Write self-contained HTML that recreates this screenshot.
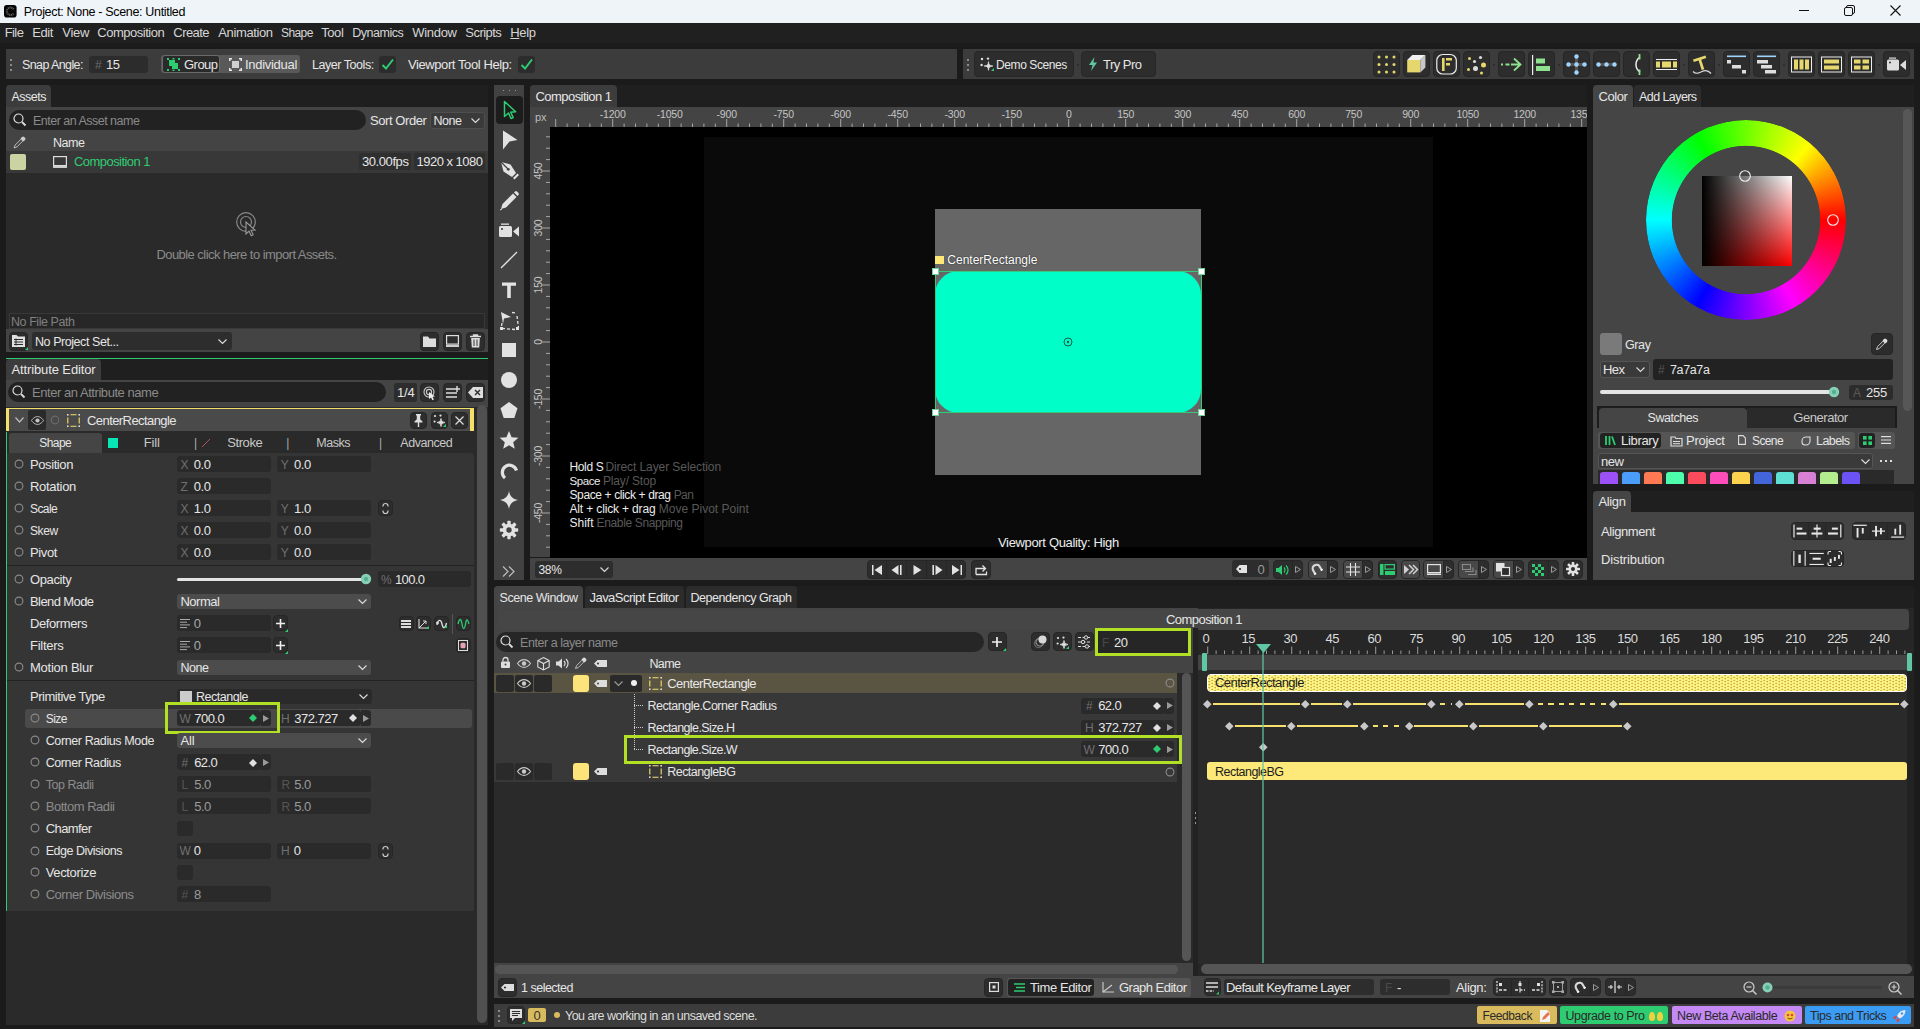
<!DOCTYPE html>
<html lang="en"><head><meta charset="utf-8"><title>Project: None - Scene: Untitled</title>
<style>
html,body{margin:0;padding:0;}
body{width:1920px;height:1029px;overflow:hidden;background:#1b1b1b;position:relative;font-family:"Liberation Sans",sans-serif;font-size:13px;}
div,svg{position:absolute;box-sizing:border-box;}
.t{height:20px;line-height:20px;white-space:nowrap;letter-spacing:-0.4px;}
svg{overflow:visible;}
svg text{font-family:"Liberation Sans",sans-serif;}
</style></head>
<body>
<div style="left:0px;top:0px;width:1920px;height:23px;background:#eff4f9;"></div>
<svg style="left:3.7px;top:4.5px;" width="12.6" height="12.6" viewBox="0 0 12.6 12.6"><rect x="0" y="0" width="12.600" height="12.600" rx="2.800" fill="#050505"/><path d="M9.600 4.200A3.700 3.700 0 1 0 9.600 8.400" fill="none" stroke="#6a6a6a" stroke-width="2" stroke-dasharray="1 .7"/></svg>
<div class="t" style="top:1.5px;color:#000;font-size:12.5px;left:23.7px;letter-spacing:-0.33px;">Project: None - Scene: Untitled</div>
<svg style="left:1799px;top:10px;" width="10" height="1" viewBox="0 0 10 1"><rect width="10" height="1" fill="#111"/></svg>
<svg style="left:1844px;top:5px;" width="11" height="11" viewBox="0 0 11 11"><rect x="0.5" y="2.5" width="8" height="8" rx="1.5" fill="none" stroke="#111"/><path d="M2.5 2.5V2A1.5 1.5 0 0 1 4 .5H9A1.5 1.5 0 0 1 10.5 2V7A1.5 1.5 0 0 1 9 8.5H8.5" fill="none" stroke="#111"/></svg>
<svg style="left:1890px;top:5px;" width="11" height="11" viewBox="0 0 11 11"><path d="M0.5 0.5L10.5 10.5M10.5 0.5L0.5 10.5" stroke="#111" stroke-width="1.1"/></svg>
<div style="left:0px;top:23px;width:1920px;height:20px;background:#202020;"></div>
<div class="t" style="top:22.5px;color:#d6d6d6;left:4.7px;letter-spacing:-0.59px;">File</div>
<div class="t" style="top:22.5px;color:#d6d6d6;left:32.3px;letter-spacing:-0.43px;">Edit</div>
<div class="t" style="top:22.5px;color:#d6d6d6;left:62.3px;letter-spacing:-0.31px;">View</div>
<div class="t" style="top:22.5px;color:#d6d6d6;left:97.3px;letter-spacing:-0.48px;">Composition</div>
<div class="t" style="top:22.5px;color:#d6d6d6;left:173.3px;letter-spacing:-0.55px;">Create</div>
<div class="t" style="top:22.5px;color:#d6d6d6;left:218.3px;letter-spacing:-0.38px;">Animation</div>
<div class="t" style="top:22.5px;color:#d6d6d6;left:281px;letter-spacing:-0.60px;font-size:12.0px;">Shape</div>
<div class="t" style="top:22.5px;color:#d6d6d6;left:321.3px;letter-spacing:-0.46px;">Tool</div>
<div class="t" style="top:22.5px;color:#d6d6d6;left:352.3px;letter-spacing:-0.48px;font-size:12.5px;">Dynamics</div>
<div class="t" style="top:22.5px;color:#d6d6d6;left:412.3px;letter-spacing:-0.31px;">Window</div>
<div class="t" style="top:22.5px;color:#d6d6d6;left:465.3px;letter-spacing:-0.53px;">Scripts</div>
<div class="t" style="top:22.5px;color:#d6d6d6;left:510.3px;letter-spacing:-0.33px;"><u>H</u>elp</div>
<div style="left:6px;top:49px;width:951px;height:30px;background:#3c3c3c;"></div>
<div style="left:10px;top:59px;width:2px;height:2px;background:#8a8a8a;"></div>
<div style="left:10px;top:64px;width:2px;height:2px;background:#8a8a8a;"></div>
<div style="left:10px;top:69px;width:2px;height:2px;background:#8a8a8a;"></div>
<div class="t" style="top:54.5px;color:#e6e6e6;left:22px;letter-spacing:-0.60px;font-size:12.5px;">Snap Angle:</div>
<div style="left:89px;top:56px;width:59px;height:17px;background:#2c2c2c;border-radius:3px;"></div>
<div class="t" style="top:54.5px;color:#6a6a6a;font-size:12px;left:95px;">#</div>
<div class="t" style="top:54.5px;color:#e6e6e6;left:106px;letter-spacing:-0.48px;">15</div>
<div style="left:161px;top:55px;width:139px;height:18px;background:#595959;border-radius:3px;"></div>
<div style="left:162px;top:55px;width:58px;height:18px;background:#2a2a2a;border-radius:3px;border:1px solid #6a6a6a;"></div>
<svg style="left:167px;top:58px;" width="13" height="13" viewBox="0 0 13 13"><rect x="2" y="2" width="6" height="6" fill="#2ecc71"/><rect x="5" y="5" width="6" height="6" fill="#2ecc71"/><g fill="#2ecc71"><rect x="0" y="0" width="2" height="2"/><rect x="11" y="0" width="2" height="2"/><rect x="0" y="11" width="2" height="2"/><rect x="11" y="11" width="2" height="2"/><rect x="5.5" y="0" width="2" height="1.5"/><rect x="5.5" y="11.5" width="2" height="1.5"/></g></svg>
<div class="t" style="top:54.5px;color:#e6e6e6;left:184px;letter-spacing:-0.53px;">Group</div>
<svg style="left:229px;top:58px;" width="13" height="13" viewBox="0 0 13 13"><rect x="3" y="3" width="7" height="7" fill="#d0d0d0"/><g fill="#e8e8e8"><rect x="0" y="0" width="3" height="1.5"/><rect x="0" y="0" width="1.5" height="3"/><rect x="10" y="0" width="3" height="1.5"/><rect x="11.5" y="0" width="1.5" height="3"/><rect x="0" y="11.5" width="3" height="1.5"/><rect x="0" y="10" width="1.5" height="3"/><rect x="10" y="11.5" width="3" height="1.5"/><rect x="11.5" y="10" width="1.5" height="3"/></g></svg>
<div class="t" style="top:54.5px;color:#e6e6e6;left:245px;letter-spacing:-0.29px;">Individual</div>
<div class="t" style="top:54.5px;color:#e6e6e6;left:312px;letter-spacing:-0.45px;font-size:12.5px;">Layer Tools:</div>
<div style="left:379px;top:56px;width:17px;height:17px;background:#2c2c2c;border-radius:3px;"></div>
<svg style="left:381px;top:58px;" width="13" height="13" viewBox="0 0 13 13"><path d="M1.5 7L5 10.5L12 1.5" fill="none" stroke="#2ecc71" stroke-width="2"/></svg>
<div class="t" style="top:54.5px;color:#e6e6e6;left:408px;letter-spacing:-0.41px;">Viewport Tool Help:</div>
<div style="left:518px;top:56px;width:17px;height:17px;background:#2c2c2c;border-radius:3px;"></div>
<svg style="left:520px;top:58px;" width="13" height="13" viewBox="0 0 13 13"><path d="M1.5 7L5 10.5L12 1.5" fill="none" stroke="#2ecc71" stroke-width="2"/></svg>
<div style="left:963px;top:49px;width:951px;height:30px;background:#3c3c3c;"></div>
<div style="left:967px;top:59px;width:2px;height:2px;background:#8a8a8a;"></div>
<div style="left:967px;top:64px;width:2px;height:2px;background:#8a8a8a;"></div>
<div style="left:967px;top:69px;width:2px;height:2px;background:#8a8a8a;"></div>
<div style="left:974.3px;top:50.7px;width:99.5px;height:26.8px;background:#2d2d2d;border-radius:4px;border:1px solid #262626;"></div>
<svg style="left:980px;top:57px;" width="14" height="14" viewBox="0 0 14 14"><g fill="#e0e0e0"><circle cx="2" cy="2" r="1.2"/><circle cx="8" cy="1.6" r="1.2"/><circle cx="1.6" cy="8" r="1.2"/><path d="M8.5 4.7Q8.5 9 12.8 9Q8.5 9 8.5 13.3Q8.5 9 4.2 9Q8.5 9 8.5 4.7z" fill="#e0e0e0" stroke="#e0e0e0" stroke-width=".8" stroke-linejoin="round"/></g><path d="M14 11v3h-3z" fill="#2ecc71"/></svg>
<div class="t" style="top:54.5px;color:#e6e6e6;left:996px;letter-spacing:-0.40px;font-size:12.0px;">Demo Scenes</div>
<div style="left:1076.5px;top:63.5px;width:2px;height:2px;background:#2a2a2a;border-radius:1px;"></div>
<div style="left:1081.3px;top:50.7px;width:74.5px;height:26.8px;background:#2d2d2d;border-radius:4px;border:1px solid #262626;"></div>
<svg style="left:1088px;top:57px;" width="10" height="14" viewBox="0 0 10 14"><path d="M6.5 0L1 8H4.6L3 14L9 5.5H5.4z" fill="#5fc7a4"/></svg>
<div class="t" style="top:54.5px;color:#e6e6e6;left:1103px;letter-spacing:-0.52px;">Try Pro</div>
<div style="left:1372.9px;top:50.7px;width:27px;height:26.8px;background:#2d2d2d;border-radius:4px;border:1px solid #262626;"></div>
<div style="left:1402.9px;top:50.7px;width:27px;height:26.8px;background:#2d2d2d;border-radius:4px;border:1px solid #262626;"></div>
<div style="left:1432.9px;top:50.7px;width:27px;height:26.8px;background:#2d2d2d;border-radius:4px;border:1px solid #262626;"></div>
<div style="left:1462.9px;top:50.7px;width:27px;height:26.8px;background:#2d2d2d;border-radius:4px;border:1px solid #262626;"></div>
<div style="left:1497.9px;top:50.7px;width:27px;height:26.8px;background:#2d2d2d;border-radius:4px;border:1px solid #262626;"></div>
<div style="left:1527.9px;top:50.7px;width:27px;height:26.8px;background:#2d2d2d;border-radius:4px;border:1px solid #262626;"></div>
<div style="left:1562.9px;top:50.7px;width:27px;height:26.8px;background:#2d2d2d;border-radius:4px;border:1px solid #262626;"></div>
<div style="left:1592.9px;top:50.7px;width:27px;height:26.8px;background:#2d2d2d;border-radius:4px;border:1px solid #262626;"></div>
<div style="left:1622.9px;top:50.7px;width:27px;height:26.8px;background:#2d2d2d;border-radius:4px;border:1px solid #262626;"></div>
<div style="left:1652.9px;top:50.7px;width:27px;height:26.8px;background:#2d2d2d;border-radius:4px;border:1px solid #262626;"></div>
<div style="left:1687.9px;top:50.7px;width:27px;height:26.8px;background:#2d2d2d;border-radius:4px;border:1px solid #262626;"></div>
<div style="left:1722.9px;top:50.7px;width:27px;height:26.8px;background:#2d2d2d;border-radius:4px;border:1px solid #262626;"></div>
<div style="left:1752.9px;top:50.7px;width:27px;height:26.8px;background:#2d2d2d;border-radius:4px;border:1px solid #262626;"></div>
<div style="left:1787.9px;top:50.7px;width:27px;height:26.8px;background:#2d2d2d;border-radius:4px;border:1px solid #262626;"></div>
<div style="left:1817.9px;top:50.7px;width:27px;height:26.8px;background:#2d2d2d;border-radius:4px;border:1px solid #262626;"></div>
<div style="left:1847.9px;top:50.7px;width:27px;height:26.8px;background:#2d2d2d;border-radius:4px;border:1px solid #262626;"></div>
<div style="left:1882.9px;top:50.7px;width:27px;height:26.8px;background:#2d2d2d;border-radius:4px;border:1px solid #262626;"></div>
<div style="left:1493.0px;top:63.5px;width:2px;height:2px;background:#2a2a2a;border-radius:1px;"></div>
<div style="left:1558.0px;top:63.5px;width:2px;height:2px;background:#2a2a2a;border-radius:1px;"></div>
<div style="left:1683.0px;top:63.5px;width:2px;height:2px;background:#2a2a2a;border-radius:1px;"></div>
<div style="left:1718.0px;top:63.5px;width:2px;height:2px;background:#2a2a2a;border-radius:1px;"></div>
<div style="left:1783.0px;top:63.5px;width:2px;height:2px;background:#2a2a2a;border-radius:1px;"></div>
<div style="left:1878.0px;top:63.5px;width:2px;height:2px;background:#2a2a2a;border-radius:1px;"></div>
<svg style="left:1372.9px;top:50.7px;" width="27" height="27" viewBox="0 0 27 27"><circle cx="6.0" cy="6.0" r="1.5" fill="#e5d76e"/><circle cx="13.5" cy="6.0" r="1.5" fill="#e5d76e"/><circle cx="21.0" cy="6.0" r="1.5" fill="#e5d76e"/><circle cx="6.0" cy="13.5" r="1.5" fill="#e5d76e"/><circle cx="13.5" cy="13.5" r="1.5" fill="#e5d76e"/><circle cx="21.0" cy="13.5" r="1.5" fill="#e5d76e"/><circle cx="6.0" cy="21.0" r="1.5" fill="#e5d76e"/><circle cx="13.5" cy="21.0" r="1.5" fill="#e5d76e"/><circle cx="21.0" cy="21.0" r="1.5" fill="#e5d76e"/></svg>
<svg style="left:1402.9px;top:50.7px;" width="27" height="27" viewBox="0 0 27 27"><path d="M4.200 9h13.100v12.400h-13.100z" fill="#e5d76e"/><path d="M4.200 9l5.100-5h13.100l-5.100 5z" fill="#f0f0f0"/><path d="M17.300 9l5.100-5v12.400l-5.100 5z" fill="#c8c8c8"/></svg>
<svg style="left:1432.9px;top:50.7px;" width="27" height="27" viewBox="0 0 27 27"><rect x="3.800" y="3.500" width="19.500" height="19.500" rx="6" fill="none" stroke="#eee" stroke-width="1.200"/><path d="M9 7h2.6v13H9zM13 7h6v2.6h-6zM13 12h4v2.6h-4z" fill="#e5d76e"/></svg>
<svg style="left:1462.9px;top:50.7px;" width="27" height="27" viewBox="0 0 27 27"><circle cx="6.5" cy="7.5" r="1.5" fill="#e5d76e"/><circle cx="17.5" cy="6.5" r="1.6" fill="#ddd"/><circle cx="11.5" cy="10.5" r="1.6" fill="#ddd"/><circle cx="20.5" cy="14" r="2.5" fill="#e5d76e"/><circle cx="12.5" cy="17.5" r="2.5" fill="#ddd"/><circle cx="5.5" cy="18.5" r="1.5" fill="#e5d76e"/><circle cx="18.5" cy="22" r="1.5" fill="#e5d76e"/></svg>
<svg style="left:1497.9px;top:50.7px;" width="27" height="27" viewBox="0 0 27 27"><path d="M3 13.5h2M7.5 13.5h4M13 13.5h9M16 7.5l6.5 6l-6.5 6" fill="none" stroke="#8fe08f" stroke-width="1.8"/></svg>
<svg style="left:1527.9px;top:50.7px;" width="27" height="27" viewBox="0 0 27 27"><rect x="4" y="4" width="1.2" height="20" fill="#eee"/><rect x="8" y="7.5" width="9" height="5" fill="#8fe08f"/><rect x="8" y="15" width="14" height="5" fill="#8fe08f"/></svg>
<svg style="left:1562.9px;top:50.7px;" width="27" height="27" viewBox="0 0 27 27"><path d="M13.5 6v15M6 13.5h15" stroke="#555" stroke-width="3"/><circle cx="13.5" cy="5.5" r="2.2" fill="#9fd4ff"/><circle cx="5.5" cy="13.5" r="2.2" fill="#9fd4ff"/><circle cx="13.5" cy="13.5" r="2.2" fill="#9fd4ff"/><circle cx="21.5" cy="13.5" r="2.2" fill="#9fd4ff"/><circle cx="13.5" cy="21.5" r="2.2" fill="#9fd4ff"/></svg>
<svg style="left:1592.9px;top:50.7px;" width="27" height="27" viewBox="0 0 27 27"><path d="M5 13.5h17" stroke="#555" stroke-width="3"/><circle cx="5.5" cy="13.5" r="2.2" fill="#9fd4ff"/><circle cx="13.5" cy="13.5" r="2.2" fill="#9fd4ff"/><circle cx="21.5" cy="13.5" r="2.2" fill="#9fd4ff"/></svg>
<svg style="left:1622.9px;top:50.7px;" width="27" height="27" viewBox="0 0 27 27"><path d="M17 6A9 9 0 0 0 17 21" fill="none" stroke="#eee" stroke-width="1.500"/><path d="M16.500 3v5.500M16.500 18.500v5.500" stroke="#8fe08f" stroke-width="1.800"/></svg>
<svg style="left:1652.9px;top:50.7px;" width="27" height="27" viewBox="0 0 27 27"><path d="M3 8.5h21M3 18.5h21" stroke="#eee" stroke-width="1"/><rect x="3" y="10.5" width="4" height="6" fill="#e5d76e"/><rect x="9" y="10.5" width="9" height="6" fill="#e5d76e"/><rect x="20" y="10.5" width="4" height="6" fill="#e5d76e"/></svg>
<svg style="left:1687.9px;top:50.7px;" width="27" height="27" viewBox="0 0 27 27"><path d="M5 8.5L17.5 4.5L18.3 7L13.2 8.7L16.3 18.2L13.6 19L10.6 9.5L5.8 11z" fill="#e5d76e"/><path d="M5 20.5c3 3 6 1.5 9 0s6-1.5 9 2" fill="none" stroke="#ddd" stroke-width="1.2"/></svg>
<svg style="left:1722.9px;top:50.7px;" width="27" height="27" viewBox="0 0 27 27"><rect x="4" y="4.5" width="19" height="1.6" fill="#9fd4ff"/><rect x="4" y="9" width="4" height="3.5" fill="#ddd"/><rect x="9" y="14" width="9" height="3.5" fill="#ddd"/><rect x="19" y="19" width="4" height="3.5" fill="#ddd"/></svg>
<svg style="left:1752.9px;top:50.7px;" width="27" height="27" viewBox="0 0 27 27"><rect x="4" y="4.5" width="19" height="1.6" fill="#9fd4ff"/><rect x="4" y="9" width="11" height="3.5" fill="#ddd"/><rect x="8" y="14" width="11" height="3.5" fill="#ddd"/><rect x="12" y="19" width="11" height="3.5" fill="#ddd"/></svg>
<svg style="left:1787.9px;top:50.7px;" width="27" height="27" viewBox="0 0 27 27"><rect x="3.5" y="6" width="20" height="15" fill="none" stroke="#eee" stroke-width="1"/><rect x="6" y="8.5" width="4" height="10" fill="#e5d76e"/><rect x="11.5" y="8.5" width="4" height="10" fill="#e5d76e"/><rect x="17" y="8.5" width="4" height="10" fill="#e5d76e"/></svg>
<svg style="left:1817.9px;top:50.7px;" width="27" height="27" viewBox="0 0 27 27"><rect x="3.5" y="6" width="20" height="15" fill="none" stroke="#eee" stroke-width="1"/><rect x="6" y="8.5" width="15" height="4" fill="#e5d76e"/><rect x="6" y="14.5" width="15" height="4" fill="#e5d76e"/></svg>
<svg style="left:1847.9px;top:50.7px;" width="27" height="27" viewBox="0 0 27 27"><rect x="3.5" y="6" width="20" height="15" fill="none" stroke="#eee" stroke-width="1"/><rect x="6" y="8.5" width="6.5" height="4" fill="#e5d76e"/><rect x="14.5" y="8.5" width="6.5" height="4" fill="#e5d76e"/><rect x="6" y="14.5" width="6.5" height="4" fill="#e5d76e"/><rect x="14.5" y="14.5" width="6.5" height="4" fill="#e5d76e"/></svg>
<svg style="left:1882.9px;top:50.7px;" width="27" height="27" viewBox="0 0 27 27"><rect x="4" y="8.5" width="12" height="11" rx="1.5" fill="#ddd"/><path d="M17 14l6-5v10z" fill="#ddd"/><rect x="6" y="6.5" width="7" height="1.2" fill="#ddd"/><circle cx="7" cy="11.5" r="1" fill="#333"/></svg>
<div style="left:6px;top:85px;width:482px;height:22px;background:#1f1f1f;"></div>
<div style="left:6px;top:85px;width:45px;height:22px;background:#3c3c3c;border-radius:4px 4px 0 0;"></div>
<div class="t" style="top:87.2px;color:#e6e6e6;left:11.5px;letter-spacing:-0.50px;font-size:12.5px;">Assets</div>
<div style="left:6px;top:107px;width:482px;height:245px;background:#2a2a2a;"></div>
<div style="left:6px;top:107px;width:482px;height:44px;background:#444;"></div>
<div style="left:9px;top:110px;width:357px;height:20px;background:#222;border-radius:10px;"></div>
<svg style="left:13px;top:113px;" width="14" height="14" viewBox="0 0 14 14"><circle cx="5.5" cy="5.5" r="4.5" fill="none" stroke="#ddd" stroke-width="1.2"/><path d="M9 9l3.5 3.5" stroke="#ddd" stroke-width="1.8"/></svg>
<div class="t" style="top:110.5px;color:#8a8a8a;left:33px;letter-spacing:-0.51px;font-size:12.5px;">Enter an Asset name</div>
<div class="t" style="top:110.5px;color:#e6e6e6;left:370px;letter-spacing:-0.42px;">Sort Order</div>
<div style="left:430px;top:112px;width:55px;height:17px;background:#3a3a3a;border-radius:3px;border:1px solid #4e4e4e;"></div>
<div class="t" style="top:110.5px;color:#e6e6e6;left:433.5px;letter-spacing:-0.47px;font-size:12.5px;">None</div>
<svg style="left:471px;top:118px;" width="9" height="5" viewBox="0 0 9 5"><path d="M0.5 0.5l4 4l4-4" fill="none" stroke="#ddd" stroke-width="1.1"/></svg>
<svg style="left:13px;top:136px;" width="13" height="13" viewBox="0 0 13 13"><path d="M1 12l1.2-3L8 3.2l1.8 1.8L4 10.8z" fill="none" stroke="#bbb" stroke-width="1"/><path d="M7.5 2.5l1.5-1.5a1.6 1.6 0 0 1 2.2 0l.8.8a1.6 1.6 0 0 1 0 2.2l-1.5 1.5z" fill="#ccc"/></svg>
<div class="t" style="top:132.5px;color:#e6e6e6;left:53px;letter-spacing:-0.46px;font-size:12.5px;">Name</div>
<div style="left:6px;top:151px;width:482px;height:22px;background:#383838;"></div>
<div style="left:10px;top:154px;width:16px;height:16px;background:#cbd3a3;border-radius:2px;"></div>
<svg style="left:53px;top:156px;" width="14" height="12" viewBox="0 0 14 12"><rect x="0.6" y="0.6" width="12.8" height="9" fill="none" stroke="#ddd" stroke-width="1.2"/><rect x="0" y="10" width="14" height="2" fill="#ccc"/></svg>
<div class="t" style="top:152px;color:#2ecc71;left:74px;letter-spacing:-0.55px;">Composition 1</div>
<div style="left:359px;top:153px;width:52px;height:17px;background:#2f2f2f;border-radius:2px;"></div>
<div class="t" style="top:151.5px;color:#e6e6e6;left:362px;letter-spacing:-0.42px;">30.00fps</div>
<div style="left:414px;top:153px;width:71px;height:17px;background:#2f2f2f;border-radius:2px;"></div>
<div class="t" style="top:151.5px;color:#e6e6e6;left:416.5px;letter-spacing:-0.51px;">1920 x 1080</div>
<svg style="left:236px;top:211px;" width="24" height="28" viewBox="0 0 24 28"><circle cx="10" cy="11" r="9.3" fill="none" stroke="#888" stroke-width="1.2"/><circle cx="10" cy="11" r="5.5" fill="none" stroke="#888" stroke-width="1.2"/><path d="M10 11v12l3-2.8l2.2 4.6l2-1l-2.2-4.5l4-.3z" fill="#2a2a2a" stroke="#999" stroke-width="1.1"/></svg>
<div class="t" style="top:245px;color:#8a8a8a;left:96.5px;width:300px;text-align:center;letter-spacing:-0.55px;">Double click here to import Assets.</div>
<div style="left:9px;top:313px;width:476px;height:16px;background:#272727;border:1px solid #383838;"></div>
<div class="t" style="top:311.5px;color:#808080;left:11px;letter-spacing:-0.44px;font-size:12.5px;">No File Path</div>
<div style="left:6px;top:329px;width:482px;height:23px;background:#444;"></div>
<div style="left:9px;top:331.5px;width:19px;height:19px;background:#2d2d2d;border-radius:4px;border:1px solid #262626;"></div>
<svg style="left:12px;top:335px;" width="13" height="12" viewBox="0 0 13 12"><path d="M0 0h4.500l1.500 1.500H13v10.500H0z" fill="#e0e0e0"/><path d="M2 4.500h9M2 7h9M2 9.500h9" stroke="#2d2d2d" stroke-width="1.200"/><path d="M4 3.500v7" stroke="#2d2d2d" stroke-width="1"/></svg>
<svg style="left:25px;top:347px;" width="3" height="3" viewBox="0 0 3 3"><path d="M3 0v3h-3z" fill="#2ecc71"/></svg>
<div style="left:32px;top:332px;width:200px;height:18px;background:#2d2d2d;border-radius:3px;"></div>
<div class="t" style="top:331.5px;color:#e6e6e6;left:35px;letter-spacing:-0.44px;font-size:12.5px;">No Project Set...</div>
<svg style="left:218px;top:339px;" width="9" height="5" viewBox="0 0 9 5"><path d="M0.5 0.5l4 4l4-4" fill="none" stroke="#ddd" stroke-width="1.1"/></svg>
<div style="left:420px;top:331.5px;width:19px;height:19px;background:#2d2d2d;border-radius:4px;border:1px solid #262626;"></div>
<div style="left:443px;top:331.5px;width:19px;height:19px;background:#2d2d2d;border-radius:4px;border:1px solid #262626;"></div>
<div style="left:466px;top:331.5px;width:19px;height:19px;background:#2d2d2d;border-radius:4px;border:1px solid #262626;"></div>
<svg style="left:423px;top:335px;" width="13" height="12" viewBox="0 0 13 12"><path d="M0 1.5h5l1.5 2H13v8.5H0z" fill="#ddd"/></svg>
<svg style="left:446px;top:335px;" width="13" height="12" viewBox="0 0 13 12"><rect x="0.6" y="0.6" width="11.8" height="8.5" fill="none" stroke="#ddd" stroke-width="1.2"/><rect x="0" y="10" width="13" height="2" fill="#ccc"/></svg>
<svg style="left:470px;top:334px;" width="11" height="14" viewBox="0 0 11 14"><path d="M0 2.5h11M3.5 2.5V1h4v1.5" stroke="#ddd" stroke-width="1.3" fill="none"/><path d="M1.2 4h8.6l-.6 9.5H1.8z" fill="#ddd"/><path d="M4 5.5v6.5M7 5.5v6.5" stroke="#333" stroke-width="1"/></svg>
<div style="left:6px;top:357.5px;width:482px;height:1px;background:#2ecc71;"></div>
<div style="left:6px;top:359px;width:482px;height:22px;background:#1f1f1f;"></div>
<div style="left:6px;top:359px;width:95px;height:21px;background:#3c3c3c;border-radius:4px 4px 0 0;"></div>
<div class="t" style="top:360px;color:#e6e6e6;left:11.5px;letter-spacing:-0.12px;">Attribute Editor</div>
<div style="left:6px;top:380px;width:482px;height:645px;background:#2a2a2a;"></div>
<div style="left:6px;top:380px;width:482px;height:27px;background:#444;"></div>
<div style="left:8px;top:382px;width:378px;height:20px;background:#222;border-radius:10px;"></div>
<svg style="left:12px;top:385px;" width="14" height="14" viewBox="0 0 14 14"><circle cx="5.5" cy="5.5" r="4.5" fill="none" stroke="#ddd" stroke-width="1.2"/><path d="M9 9l3.5 3.5" stroke="#ddd" stroke-width="1.8"/></svg>
<div class="t" style="top:382.5px;color:#8a8a8a;left:32px;letter-spacing:-0.45px;">Enter an Attribute name</div>
<div style="left:394px;top:383px;width:23px;height:19px;background:#2d2d2d;border-radius:3px;"></div>
<div class="t" style="top:382.5px;color:#e6e6e6;left:397px;letter-spacing:-0.19px;">1/4</div>
<div style="left:420px;top:383px;width:19px;height:19px;background:#2d2d2d;border-radius:4px;border:1px solid #262626;"></div>
<div style="left:443px;top:383px;width:19px;height:19px;background:#2d2d2d;border-radius:4px;border:1px solid #262626;"></div>
<div style="left:466px;top:383px;width:19px;height:19px;background:#2d2d2d;border-radius:4px;border:1px solid #262626;"></div>
<svg style="left:423px;top:386px;" width="14" height="14" viewBox="0 0 14 14"><circle cx="6" cy="6" r="5" fill="none" stroke="#ccc" stroke-width="1.1"/><circle cx="6" cy="6" r="2.6" fill="none" stroke="#ccc" stroke-width="1.1"/><path d="M6 6v7l2-1.6l1.4 2.8l1.5-.7l-1.4-2.7l2.5-.2z" fill="#eee"/></svg>
<svg style="left:446px;top:386px;" width="14" height="13" viewBox="0 0 14 13"><path d="M0 3h8M0 7h11M0 11h11" stroke="#ddd" stroke-width="1.6"/><path d="M11 0v6M8 3h6" stroke="#ddd" stroke-width="1.4"/></svg>
<svg style="left:468px;top:387px;" width="15" height="11" viewBox="0 0 15 11"><path d="M0 5.5L5 0h10v11H5z" fill="#ddd"/><path d="M7 3l5 5M12 3l-5 5" stroke="#2d2d2d" stroke-width="1.4"/></svg>
<div style="left:476.5px;top:405px;width:10px;height:618px;background:#505050;border-radius:5px;"></div>
<div style="left:6px;top:408px;width:468px;height:23px;background:#4a4a4a;border-top:1.5px solid #f3e06a;border-left:3px solid #f3e06a;border-right:4px solid #f3e06a;"></div>
<svg style="left:15px;top:417px;" width="9" height="6" viewBox="0 0 9 6"><path d="M0.5 0.5l4 4.5l4-4.5" fill="none" stroke="#bbb" stroke-width="1.2"/></svg>
<div style="left:28px;top:410px;width:18px;height:20px;background:#2a2a2a;border-radius:2px;"></div>
<svg style="left:30.5px;top:415.5px;" width="13" height="9" viewBox="0 0 13 9"><path d="M.5 4.500C3 1 5 .6 6.500 .6S10 1 12.500 4.500C10 8 8 8.400 6.500 8.400S3 8 .5 4.500z" fill="none" stroke="#c4c4c4" stroke-width="1"/><circle cx="6.500" cy="4.500" r="2.100" fill="#c4c4c4"/></svg>
<svg style="left:50px;top:415px;" width="10" height="10" viewBox="0 0 10 10"><circle cx="5" cy="5" r="3.8" fill="none" stroke="#6a6a6a" stroke-width="1.2"/></svg>
<svg style="left:67px;top:414px;" width="13" height="13" viewBox="0 0 13 13"><path d="M3.500 .8h6M3.500 12.200h6M.8 3.500v6M12.200 3.500v6" stroke="#f3e06a" stroke-width="1.100"/><g fill="#ddd"><rect width="1.600" height="1.600"/><rect x="11.400" width="1.600" height="1.600"/><rect y="11.400" width="1.600" height="1.600"/><rect x="11.400" y="11.400" width="1.600" height="1.600"/></g></svg>
<div class="t" style="top:410.5px;color:#e6e6e6;left:87px;letter-spacing:-0.57px;">CenterRectangle</div>
<div style="left:410px;top:412px;width:17px;height:17px;background:#2d2d2d;border-radius:4px;border:1px solid #262626;"></div>
<div style="left:430.5px;top:412px;width:17px;height:17px;background:#2d2d2d;border-radius:4px;border:1px solid #262626;"></div>
<div style="left:451px;top:412px;width:17px;height:17px;background:#2d2d2d;border-radius:4px;border:1px solid #262626;"></div>
<svg style="left:414px;top:414px;" width="9" height="13" viewBox="0 0 9 13"><path d="M2 0h5v1.2l-.8.6v3.4l2.3 2.3v1H5.2V13h-1.4V8.5H.5v-1l2.3-2.3V1.8L2 1.2z" fill="#ddd"/></svg>
<svg style="left:433px;top:414px;" width="13" height="13" viewBox="0 0 13 13"><g fill="#e0e0e0"><circle cx="2" cy="2" r="1.1"/><circle cx="7.5" cy="1.6" r="1.1"/><circle cx="1.6" cy="7.5" r="1.1"/></g><path d="M8 4.5Q8 8.5 12 8.5Q8 8.5 8 12.5Q8 8.5 4 8.5Q8 8.5 8 4.5z" fill="#e0e0e0" stroke="#e0e0e0" stroke-width=".8" stroke-linejoin="round"/><path d="M13 10v3h-3z" fill="#2ecc71"/></svg>
<svg style="left:455px;top:416px;" width="9" height="9" viewBox="0 0 9 9"><path d="M0.5 0.5l8 8M8.5 0.5l-8 8" stroke="#ddd" stroke-width="1.2"/></svg>
<div style="left:6px;top:431px;width:468px;height:22px;background:#2a2a2a;"></div>
<div style="left:6px;top:453px;width:468px;height:457.5px;background:#353535;border-radius:0 4px 0 0;"></div>
<div style="left:6px;top:432px;width:1px;height:478.5px;background:#2ecc71;"></div>
<div style="left:8.5px;top:433px;width:93.5px;height:20px;background:#454545;border-radius:3px 3px 0 0;"></div>
<div class="t" style="top:433px;color:#e6e6e6;left:-94.8px;width:300px;text-align:center;letter-spacing:-0.54px;font-size:12.0px;">Shape</div>
<div style="left:108px;top:438.4px;width:10px;height:9.6px;background:#08e6b6;"></div>
<div class="t" style="top:433px;color:#c8c8c8;left:1.8000000000000114px;width:300px;text-align:center;letter-spacing:-0.15px;">Fill</div>
<div class="t" style="top:432.5px;color:#aaa;font-size:12px;left:45.30000000000001px;width:300px;text-align:center;">|</div>
<svg style="left:201px;top:438px;" width="10" height="10" viewBox="0 0 10 10"><rect width="10" height="10" fill="#2a2a2a"/><path d="M1 9L9 1" stroke="#a85858" stroke-width="1"/></svg>
<div class="t" style="top:433px;color:#c8c8c8;left:94.80000000000001px;width:300px;text-align:center;letter-spacing:-0.43px;">Stroke</div>
<div class="t" style="top:432.5px;color:#aaa;font-size:12px;left:137.5px;width:300px;text-align:center;">|</div>
<div class="t" style="top:433px;color:#c8c8c8;left:183.2px;width:300px;text-align:center;letter-spacing:-0.42px;font-size:12.5px;">Masks</div>
<div class="t" style="top:432.5px;color:#aaa;font-size:12px;left:230.3px;width:300px;text-align:center;">|</div>
<div class="t" style="top:433px;color:#c8c8c8;left:276.3px;width:300px;text-align:center;letter-spacing:-0.45px;font-size:12.5px;">Advanced</div>
<svg style="left:13.8px;top:459.2px;" width="10" height="10" viewBox="0 0 10 10"><circle cx="5" cy="5" r="3.9" fill="none" stroke="#8a8a8a" stroke-width="1.1"/></svg>
<div class="t" style="top:454.7px;color:#e6e6e6;left:30px;letter-spacing:-0.41px;">Position</div>
<div style="left:177px;top:456.0px;width:93.7px;height:16px;background:#2a2a2a;border-radius:3px;"></div>
<div class="t" style="top:454.7px;color:#707070;font-size:12px;left:180.5px;">X</div>
<div class="t" style="top:454.7px;color:#e6e6e6;left:193.7px;letter-spacing:-0.36px;">0.0</div>
<div style="left:277.2px;top:456.0px;width:93.7px;height:16px;background:#2a2a2a;border-radius:3px;"></div>
<div class="t" style="top:454.7px;color:#707070;font-size:12px;left:280.7px;">Y</div>
<div class="t" style="top:454.7px;color:#e6e6e6;left:293.9px;letter-spacing:-0.36px;">0.0</div>
<svg style="left:13.8px;top:481.3px;" width="10" height="10" viewBox="0 0 10 10"><circle cx="5" cy="5" r="3.9" fill="none" stroke="#8a8a8a" stroke-width="1.1"/></svg>
<div class="t" style="top:476.8px;color:#e6e6e6;left:30px;letter-spacing:-0.30px;">Rotation</div>
<div style="left:177px;top:478.1px;width:93.7px;height:16px;background:#2a2a2a;border-radius:3px;"></div>
<div class="t" style="top:476.8px;color:#707070;font-size:12px;left:180.5px;">Z</div>
<div class="t" style="top:476.8px;color:#e6e6e6;left:193.7px;letter-spacing:-0.36px;">0.0</div>
<svg style="left:13.8px;top:503.3px;" width="10" height="10" viewBox="0 0 10 10"><circle cx="5" cy="5" r="3.9" fill="none" stroke="#8a8a8a" stroke-width="1.1"/></svg>
<div class="t" style="top:498.8px;color:#e6e6e6;left:30px;letter-spacing:-0.58px;font-size:12.0px;">Scale</div>
<div style="left:177px;top:500.1px;width:93.7px;height:16px;background:#2a2a2a;border-radius:3px;"></div>
<div class="t" style="top:498.8px;color:#707070;font-size:12px;left:180.5px;">X</div>
<div class="t" style="top:498.8px;color:#e6e6e6;left:193.7px;letter-spacing:-0.36px;">1.0</div>
<div style="left:277.2px;top:500.1px;width:93.7px;height:16px;background:#2a2a2a;border-radius:3px;"></div>
<div class="t" style="top:498.8px;color:#707070;font-size:12px;left:280.7px;">Y</div>
<div class="t" style="top:498.8px;color:#e6e6e6;left:293.9px;letter-spacing:-0.36px;">1.0</div>
<svg style="left:13.8px;top:525.1px;" width="10" height="10" viewBox="0 0 10 10"><circle cx="5" cy="5" r="3.9" fill="none" stroke="#8a8a8a" stroke-width="1.1"/></svg>
<div class="t" style="top:520.6px;color:#e6e6e6;left:30px;letter-spacing:-0.41px;font-size:12.0px;">Skew</div>
<div style="left:177px;top:521.9px;width:93.7px;height:16px;background:#2a2a2a;border-radius:3px;"></div>
<div class="t" style="top:520.6px;color:#707070;font-size:12px;left:180.5px;">X</div>
<div class="t" style="top:520.6px;color:#e6e6e6;left:193.7px;letter-spacing:-0.36px;">0.0</div>
<div style="left:277.2px;top:521.9px;width:93.7px;height:16px;background:#2a2a2a;border-radius:3px;"></div>
<div class="t" style="top:520.6px;color:#707070;font-size:12px;left:280.7px;">Y</div>
<div class="t" style="top:520.6px;color:#e6e6e6;left:293.9px;letter-spacing:-0.36px;">0.0</div>
<svg style="left:13.8px;top:547.1px;" width="10" height="10" viewBox="0 0 10 10"><circle cx="5" cy="5" r="3.9" fill="none" stroke="#8a8a8a" stroke-width="1.1"/></svg>
<div class="t" style="top:542.6px;color:#e6e6e6;left:30px;letter-spacing:-0.36px;">Pivot</div>
<div style="left:177px;top:543.9px;width:93.7px;height:16px;background:#2a2a2a;border-radius:3px;"></div>
<div class="t" style="top:542.6px;color:#707070;font-size:12px;left:180.5px;">X</div>
<div class="t" style="top:542.6px;color:#e6e6e6;left:193.7px;letter-spacing:-0.36px;">0.0</div>
<div style="left:277.2px;top:543.9px;width:93.7px;height:16px;background:#2a2a2a;border-radius:3px;"></div>
<div class="t" style="top:542.6px;color:#707070;font-size:12px;left:280.7px;">Y</div>
<div class="t" style="top:542.6px;color:#e6e6e6;left:293.9px;letter-spacing:-0.36px;">0.0</div>
<div style="left:377.5px;top:500.1px;width:15px;height:16px;background:#2d2d2d;border-radius:4px;border:1px solid #262626;"></div>
<svg style="left:381.5px;top:503.3px;" width="7" height="11" viewBox="0 0 7 11"><path d="M1 3.5V3A2.5 2.5 0 0 1 6 3v.5M1 7.5V8A2.5 2.5 0 0 0 6 8v-.5" fill="none" stroke="#ccc" stroke-width="1.2"/></svg>
<div style="left:7px;top:565px;width:467px;height:1px;background:#222;"></div>
<svg style="left:13.8px;top:574.0px;" width="10" height="10" viewBox="0 0 10 10"><circle cx="5" cy="5" r="3.9" fill="none" stroke="#8a8a8a" stroke-width="1.1"/></svg>
<div class="t" style="top:569.5px;color:#e6e6e6;left:30px;letter-spacing:-0.37px;">Opacity</div>
<div style="left:177px;top:577.5px;width:189px;height:3.4px;background:#e4e4e4;border-radius:2px;"></div>
<svg style="left:360px;top:573.0px;" width="12" height="12" viewBox="0 0 12 12"><circle cx="6" cy="6" r="5.2" fill="#86d0b6"/><circle cx="6" cy="6" r="2.200" fill="#55b092"/></svg>
<div style="left:377.5px;top:570.8px;width:93px;height:16px;background:#2a2a2a;border-radius:3px;"></div>
<div class="t" style="top:569.5px;color:#707070;font-size:12px;left:381px;">%</div>
<div class="t" style="top:569.5px;color:#e6e6e6;left:395px;letter-spacing:-0.61px;">100.0</div>
<svg style="left:13.8px;top:596.1px;" width="10" height="10" viewBox="0 0 10 10"><circle cx="5" cy="5" r="3.9" fill="none" stroke="#8a8a8a" stroke-width="1.1"/></svg>
<div class="t" style="top:591.6px;color:#e6e6e6;left:30px;letter-spacing:-0.59px;">Blend Mode</div>
<div style="left:177px;top:593.6px;width:193.5px;height:15px;background:#4c4c4c;border-radius:3px;"></div>
<div class="t" style="top:591.6px;color:#e6e6e6;left:180.4px;letter-spacing:-0.48px;">Normal</div>
<svg style="left:357.5px;top:599.1px;" width="9" height="5" viewBox="0 0 9 5"><path d="M0.5 0.5l4 4l4-4" fill="none" stroke="#ddd" stroke-width="1.1"/></svg>
<div class="t" style="top:613.6px;color:#e6e6e6;left:30px;letter-spacing:-0.41px;">Deformers</div>
<div style="left:177px;top:614.9px;width:93.7px;height:16px;background:#2a2a2a;border-radius:3px;"></div>
<svg style="left:180px;top:619.1px;" width="10" height="9" viewBox="0 0 10 9"><path d="M0 .5h10M0 3.2h7M0 5.9h10M0 8.6h7" stroke="#aaa" stroke-width="1"/></svg>
<div class="t" style="top:613.6px;color:#a8a8a8;left:193.7px;">0</div>
<div style="left:273.4px;top:614.9px;width:15px;height:16px;background:#2d2d2d;border-radius:4px;border:1px solid #262626;"></div>
<svg style="left:276.4px;top:618.6px;" width="9" height="9" viewBox="0 0 9 9"><path d="M4.5 0v9M0 4.5h9" stroke="#eee" stroke-width="1.6"/></svg>
<svg style="left:285px;top:628.6px;" width="3" height="3" viewBox="0 0 3 3"><path d="M3 0v3h-3z" fill="#2ecc71"/></svg>
<div style="left:398.5px;top:615.6px;width:15px;height:15.5px;background:#2d2d2d;border-radius:4px;border:1px solid #262626;"></div>
<div style="left:416px;top:615.6px;width:15px;height:15.5px;background:#2d2d2d;border-radius:4px;border:1px solid #262626;"></div>
<div style="left:434px;top:615.6px;width:15px;height:15.5px;background:#2d2d2d;border-radius:4px;border:1px solid #262626;"></div>
<div style="left:455.7px;top:615.6px;width:15px;height:15.5px;background:#2d2d2d;border-radius:4px;border:1px solid #262626;"></div>
<svg style="left:401px;top:619.6px;" width="10" height="8" viewBox="0 0 10 8"><path d="M0 1h10M0 4h10M0 7h10" stroke="#ddd" stroke-width="1.8"/></svg>
<svg style="left:418px;top:618.6px;" width="11" height="10" viewBox="0 0 11 10"><path d="M1 0v9h9" fill="none" stroke="#ddd" stroke-width="1.1"/><path d="M1 9L8 2M8 2h-3M8 2v3" fill="none" stroke="#ddd" stroke-width="1"/><path d="M11 7v3h-3z" fill="#2ecc71"/></svg>
<svg style="left:436px;top:619.6px;" width="11" height="8" viewBox="0 0 11 8"><path d="M1 5c1-6 4-6 5-1s3 5 4.5-1" fill="none" stroke="#ddd" stroke-width="1.3"/><circle cx="1.5" cy="3" r="1.4" fill="#ddd"/><path d="M11 5v3h-3z" fill="#2ecc71"/></svg>
<div style="left:452px;top:613.6px;width:1px;height:20px;background:#555;"></div>
<svg style="left:457.5px;top:619.6px;" width="11" height="8" viewBox="0 0 11 8"><path d="M0 4c1.5-6 3-6 4 0s2.5 6 3.5 0s2-5 3.5 0" fill="none" stroke="#2ecc71" stroke-width="1.3"/></svg>
<div class="t" style="top:635.6px;color:#e6e6e6;left:30px;letter-spacing:-0.27px;">Filters</div>
<div style="left:177px;top:636.9px;width:93.7px;height:16px;background:#2a2a2a;border-radius:3px;"></div>
<svg style="left:180px;top:641.1px;" width="10" height="9" viewBox="0 0 10 9"><path d="M0 .5h10M0 3.2h7M0 5.9h10M0 8.6h7" stroke="#aaa" stroke-width="1"/></svg>
<div class="t" style="top:635.6px;color:#a8a8a8;left:193.7px;">0</div>
<div style="left:273.4px;top:636.9px;width:15px;height:16px;background:#2d2d2d;border-radius:4px;border:1px solid #262626;"></div>
<svg style="left:276.4px;top:640.6px;" width="9" height="9" viewBox="0 0 9 9"><path d="M4.5 0v9M0 4.5h9" stroke="#eee" stroke-width="1.6"/></svg>
<svg style="left:285px;top:650.6px;" width="3" height="3" viewBox="0 0 3 3"><path d="M3 0v3h-3z" fill="#2ecc71"/></svg>
<div style="left:455.7px;top:637.6px;width:15px;height:15.5px;background:#2d2d2d;border-radius:4px;border:1px solid #262626;"></div>
<svg style="left:458.2px;top:640.1px;" width="10" height="11" viewBox="0 0 10 11"><rect x="0.5" y="0.5" width="9" height="10" fill="none" stroke="#ddd" stroke-width="1"/><rect x="2.5" y="2.7" width="5" height="5.6" rx="1.5" fill="#e8a0b0"/></svg>
<svg style="left:13.8px;top:662.2px;" width="10" height="10" viewBox="0 0 10 10"><circle cx="5" cy="5" r="3.9" fill="none" stroke="#8a8a8a" stroke-width="1.1"/></svg>
<div class="t" style="top:657.7px;color:#e6e6e6;left:30px;letter-spacing:-0.25px;">Motion Blur</div>
<div style="left:177px;top:659.7px;width:193.5px;height:15px;background:#4c4c4c;border-radius:3px;"></div>
<div class="t" style="top:657.7px;color:#e6e6e6;left:180.4px;letter-spacing:-0.47px;font-size:12.5px;">None</div>
<svg style="left:357.5px;top:665.2px;" width="9" height="5" viewBox="0 0 9 5"><path d="M0.5 0.5l4 4l4-4" fill="none" stroke="#ddd" stroke-width="1.1"/></svg>
<div style="left:7px;top:680.4px;width:467px;height:1px;background:#222;"></div>
<div class="t" style="top:686.7px;color:#e6e6e6;left:30px;letter-spacing:-0.47px;">Primitive Type</div>
<div style="left:177px;top:688.7px;width:194.5px;height:15px;background:#2a2a2a;border-radius:3px;"></div>
<div style="left:180px;top:690.7px;width:12px;height:12px;background:#ccc;"></div>
<div class="t" style="top:686.7px;color:#e6e6e6;left:196px;letter-spacing:-0.48px;font-size:12.5px;">Rectangle</div>
<svg style="left:359px;top:694.2px;" width="9" height="5" viewBox="0 0 9 5"><path d="M0.5 0.5l4 4l4-4" fill="none" stroke="#ddd" stroke-width="1.1"/></svg>
<div style="left:25px;top:708.5px;width:446.5px;height:19.5px;background:#4a4a4a;border-radius:3px;"></div>
<svg style="left:29.799999999999997px;top:713.0px;" width="10" height="10" viewBox="0 0 10 10"><circle cx="5" cy="5" r="3.9" fill="none" stroke="#8a8a8a" stroke-width="1.1"/></svg>
<div class="t" style="top:708.5px;color:#e6e6e6;left:45.7px;letter-spacing:-0.51px;font-size:12.0px;">Size</div>
<div style="left:177px;top:709.8px;width:84px;height:16px;background:#2a2a2a;border-radius:3px;"></div>
<div class="t" style="top:708.5px;color:#707070;font-size:12px;left:179.5px;">W</div>
<div class="t" style="top:708.5px;color:#e6e6e6;left:194.2px;letter-spacing:-0.51px;">700.0</div>
<svg style="left:249px;top:714.2px;" width="8" height="8" viewBox="0 0 8 8"><path d="M4 0l4 4l-4 4l-4-4z" fill="#2ecc71"/></svg>
<div style="left:261.3px;top:709.8px;width:9.5px;height:16px;background:#2a2a2a;border-radius:0 3px 3px 0;"></div>
<svg style="left:262.8px;top:715.0px;" width="6" height="7" viewBox="0 0 6 7"><path d="M0 0l6 3.5l-6 3.5z" fill="#9a9a9a"/></svg>
<div style="left:277.2px;top:709.8px;width:84px;height:16px;background:#2a2a2a;border-radius:3px;"></div>
<div class="t" style="top:708.5px;color:#707070;font-size:12px;left:281px;">H</div>
<div class="t" style="top:708.5px;color:#e6e6e6;left:294.3px;letter-spacing:-0.50px;">372.727</div>
<svg style="left:348.8px;top:714.2px;" width="8" height="8" viewBox="0 0 8 8"><path d="M4 0l4 4l-4 4l-4-4z" fill="#e0e0e0"/></svg>
<div style="left:361.4px;top:709.8px;width:9.5px;height:16px;background:#2a2a2a;border-radius:0 3px 3px 0;"></div>
<svg style="left:362.9px;top:715.0px;" width="6" height="7" viewBox="0 0 6 7"><path d="M0 0l6 3.5l-6 3.5z" fill="#9a9a9a"/></svg>
<div style="left:165px;top:702px;width:115px;height:31.5px;border:3px solid #b2e024;"></div>
<svg style="left:29.799999999999997px;top:735.3px;" width="10" height="10" viewBox="0 0 10 10"><circle cx="5" cy="5" r="3.9" fill="none" stroke="#8a8a8a" stroke-width="1.1"/></svg>
<div class="t" style="top:730.8px;color:#e6e6e6;left:45.7px;letter-spacing:-0.39px;font-size:12.5px;">Corner Radius Mode</div>
<div style="left:177px;top:732.8px;width:193.5px;height:15px;background:#4c4c4c;border-radius:3px;"></div>
<div class="t" style="top:730.8px;color:#e6e6e6;left:180.4px;letter-spacing:-0.15px;">All</div>
<svg style="left:357.5px;top:738.3px;" width="9" height="5" viewBox="0 0 9 5"><path d="M0.5 0.5l4 4l4-4" fill="none" stroke="#ddd" stroke-width="1.1"/></svg>
<svg style="left:29.799999999999997px;top:757.3px;" width="10" height="10" viewBox="0 0 10 10"><circle cx="5" cy="5" r="3.9" fill="none" stroke="#8a8a8a" stroke-width="1.1"/></svg>
<div class="t" style="top:752.8px;color:#e6e6e6;left:45.7px;letter-spacing:-0.41px;font-size:12.5px;">Corner Radius</div>
<div style="left:177px;top:754.0999999999999px;width:84px;height:16px;background:#2a2a2a;border-radius:3px;"></div>
<div class="t" style="top:752.8px;color:#707070;font-size:12px;left:181.5px;">#</div>
<div class="t" style="top:752.8px;color:#e6e6e6;left:194.2px;letter-spacing:-0.58px;">62.0</div>
<svg style="left:249px;top:758.5px;" width="8" height="8" viewBox="0 0 8 8"><path d="M4 0l4 4l-4 4l-4-4z" fill="#e0e0e0"/></svg>
<div style="left:261.3px;top:754.0999999999999px;width:9.5px;height:16px;background:#2a2a2a;border-radius:0 3px 3px 0;"></div>
<svg style="left:262.8px;top:759.3px;" width="6" height="7" viewBox="0 0 6 7"><path d="M0 0l6 3.5l-6 3.5z" fill="#9a9a9a"/></svg>
<svg style="left:29.799999999999997px;top:779.2px;" width="10" height="10" viewBox="0 0 10 10"><circle cx="5" cy="5" r="3.9" fill="none" stroke="#8a8a8a" stroke-width="1.1"/></svg>
<div class="t" style="top:774.7px;color:#8c8c8c;left:45.7px;letter-spacing:-0.48px;font-size:12.5px;">Top Radii</div>
<div style="left:177px;top:776.0px;width:93.7px;height:16px;background:#2a2a2a;border-radius:3px;"></div>
<div class="t" style="top:774.7px;color:#555;font-size:12px;left:181.5px;">L</div>
<div class="t" style="top:774.7px;color:#9a9a9a;left:194.2px;letter-spacing:-0.52px;">5.0</div>
<div style="left:277.2px;top:776.0px;width:93.7px;height:16px;background:#2a2a2a;border-radius:3px;"></div>
<div class="t" style="top:774.7px;color:#555;font-size:12px;left:281.5px;">R</div>
<div class="t" style="top:774.7px;color:#9a9a9a;left:294.3px;letter-spacing:-0.52px;">5.0</div>
<svg style="left:29.799999999999997px;top:801.4px;" width="10" height="10" viewBox="0 0 10 10"><circle cx="5" cy="5" r="3.9" fill="none" stroke="#8a8a8a" stroke-width="1.1"/></svg>
<div class="t" style="top:796.9px;color:#8c8c8c;left:45.7px;letter-spacing:-0.47px;">Bottom Radii</div>
<div style="left:177px;top:798.1999999999999px;width:93.7px;height:16px;background:#2a2a2a;border-radius:3px;"></div>
<div class="t" style="top:796.9px;color:#555;font-size:12px;left:181.5px;">L</div>
<div class="t" style="top:796.9px;color:#9a9a9a;left:194.2px;letter-spacing:-0.52px;">5.0</div>
<div style="left:277.2px;top:798.1999999999999px;width:93.7px;height:16px;background:#2a2a2a;border-radius:3px;"></div>
<div class="t" style="top:796.9px;color:#555;font-size:12px;left:281.5px;">R</div>
<div class="t" style="top:796.9px;color:#9a9a9a;left:294.3px;letter-spacing:-0.52px;">5.0</div>
<svg style="left:29.799999999999997px;top:823.2px;" width="10" height="10" viewBox="0 0 10 10"><circle cx="5" cy="5" r="3.9" fill="none" stroke="#8a8a8a" stroke-width="1.1"/></svg>
<div class="t" style="top:818.7px;color:#e6e6e6;left:45.7px;letter-spacing:-0.58px;">Chamfer</div>
<div style="left:177px;top:820.7px;width:15.5px;height:15px;background:#2a2a2a;border-radius:3px;"></div>
<svg style="left:29.799999999999997px;top:845.7px;" width="10" height="10" viewBox="0 0 10 10"><circle cx="5" cy="5" r="3.9" fill="none" stroke="#8a8a8a" stroke-width="1.1"/></svg>
<div class="t" style="top:841.2px;color:#e6e6e6;left:45.7px;letter-spacing:-0.46px;font-size:12.5px;">Edge Divisions</div>
<div style="left:177px;top:842.5px;width:93.7px;height:16px;background:#2a2a2a;border-radius:3px;"></div>
<div class="t" style="top:841.2px;color:#707070;font-size:12px;left:179.5px;">W</div>
<div class="t" style="top:841.2px;color:#e6e6e6;left:193.8px;">0</div>
<div style="left:277.2px;top:842.5px;width:93.7px;height:16px;background:#2a2a2a;border-radius:3px;"></div>
<div class="t" style="top:841.2px;color:#707070;font-size:12px;left:281px;">H</div>
<div class="t" style="top:841.2px;color:#e6e6e6;left:293.8px;">0</div>
<div style="left:377.5px;top:842.5px;width:15px;height:16px;background:#2d2d2d;border-radius:4px;border:1px solid #262626;"></div>
<svg style="left:381.5px;top:845.7px;" width="7" height="11" viewBox="0 0 7 11"><path d="M1 3.5V3A2.5 2.5 0 0 1 6 3v.5M1 7.5V8A2.5 2.5 0 0 0 6 8v-.5" fill="none" stroke="#ccc" stroke-width="1.2"/></svg>
<svg style="left:29.799999999999997px;top:867.1px;" width="10" height="10" viewBox="0 0 10 10"><circle cx="5" cy="5" r="3.9" fill="none" stroke="#8a8a8a" stroke-width="1.1"/></svg>
<div class="t" style="top:862.6px;color:#e6e6e6;left:45.7px;letter-spacing:-0.35px;">Vectorize</div>
<div style="left:177px;top:864.6px;width:15.5px;height:15px;background:#2a2a2a;border-radius:3px;"></div>
<svg style="left:29.799999999999997px;top:889.0px;" width="10" height="10" viewBox="0 0 10 10"><circle cx="5" cy="5" r="3.9" fill="none" stroke="#8a8a8a" stroke-width="1.1"/></svg>
<div class="t" style="top:884.5px;color:#8c8c8c;left:45.7px;letter-spacing:-0.47px;">Corner Divisions</div>
<div style="left:177px;top:885.8px;width:93.7px;height:16px;background:#2a2a2a;border-radius:3px;"></div>
<div class="t" style="top:884.5px;color:#555;font-size:12px;left:181.5px;">#</div>
<div class="t" style="top:884.5px;color:#9a9a9a;left:194px;">8</div>
<div style="left:494px;top:85px;width:30px;height:495px;background:#424242;"></div>
<div style="left:502.5px;top:89.5px;width:1.6px;height:1.6px;background:#999;"></div>
<div style="left:508.5px;top:89.5px;width:1.6px;height:1.6px;background:#999;"></div>
<div style="left:514.5px;top:89.5px;width:1.6px;height:1.6px;background:#999;"></div>
<div style="left:495.5px;top:96px;width:27.5px;height:27.5px;background:#1c1c1c;border-radius:4px;"></div>
<svg style="left:498.0px;top:99.0px;" width="22" height="22" viewBox="0 0 22 22"><path d="M6.5 2.5v15l4-3.5l2.5 5.5l2.2-1l-2.5-5.3l5-.4z" fill="none" stroke="#2ecc71" stroke-width="1.5" stroke-linejoin="round"/></svg>
<svg style="left:498.0px;top:129.0px;" width="22" height="22" viewBox="0 0 22 22"><path d="M5 1.500L19.500 11L11.500 12.500L5 20.500z" fill="#e2e2e2"/></svg>
<svg style="left:498.0px;top:159.0px;" width="22" height="22" viewBox="0 0 22 22"><path d="M3 3l9.5 2.5l5.5 8.5l-4 4l-8.5-5.5z" fill="#e2e2e2"/><path d="M3 3l7 7" stroke="#424242" stroke-width="1.2"/><circle cx="10.3" cy="10.3" r="1.4" fill="#424242"/><path d="M15 19l4.5-4.5l1.5 1.5l-4.5 4.5z" fill="#e2e2e2"/></svg>
<svg style="left:498.0px;top:189.0px;" width="22" height="22" viewBox="0 0 22 22"><path d="M3 20l1.5-5L15 4.5l3.5 3.5L8 18.5z" fill="#e2e2e2"/><path d="M16 3.5l1-1a1.5 1.5 0 0 1 2 0l1.5 1.5a1.5 1.5 0 0 1 0 2l-1 1z" fill="#e2e2e2"/><path d="M2 21l2-1" stroke="#e2e2e2" stroke-width="1"/></svg>
<svg style="left:498.0px;top:219.0px;" width="22" height="22" viewBox="0 0 22 22"><rect x="1" y="7" width="13" height="11" rx="1.5" fill="#e2e2e2"/><path d="M15 12.5l6-5v10z" fill="#e2e2e2"/><rect x="3" y="4.5" width="8" height="1.3" fill="#e2e2e2"/><circle cx="4" cy="10" r="1" fill="#333"/></svg>
<svg style="left:498.0px;top:249.0px;" width="22" height="22" viewBox="0 0 22 22"><path d="M3 19L19 3" stroke="#e2e2e2" stroke-width="1.3"/></svg>
<svg style="left:498.0px;top:279.0px;" width="22" height="22" viewBox="0 0 22 22"><path d="M4 3.5h14v3.2h-5.2V19h-3.6V6.7H4z" fill="#e2e2e2"/></svg>
<svg style="left:498.0px;top:309.0px;" width="22" height="22" viewBox="0 0 22 22"><path d="M3 3l10 5l-7 1.5l-1 5.5z" fill="#e2e2e2"/><path d="M14 3.5l4 .5M19 7l1.5 12M17 20.5l-12-1M3.5 17l.5-3" stroke="#e2e2e2" stroke-width="1.3" stroke-dasharray="3 2"/><rect x="18" y="18" width="3" height="3" fill="#e2e2e2"/><rect x="2" y="18" width="3" height="3" fill="#e2e2e2"/></svg>
<svg style="left:498.0px;top:339.0px;" width="22" height="22" viewBox="0 0 22 22"><rect x="4" y="4" width="14" height="14" fill="#e2e2e2"/></svg>
<svg style="left:498.0px;top:369.0px;" width="22" height="22" viewBox="0 0 22 22"><circle cx="11" cy="11" r="8" fill="#e2e2e2"/></svg>
<svg style="left:498.0px;top:399.0px;" width="22" height="22" viewBox="0 0 22 22"><path d="M11 3l8.5 6.2l-3.2 9.8H5.7L2.5 9.2z" fill="#e2e2e2"/></svg>
<svg style="left:498.0px;top:429.0px;" width="22" height="22" viewBox="0 0 22 22"><path d="M11 2l2.6 6.3l6.8.5l-5.2 4.4l1.6 6.6L11 16.2L5.2 19.8l1.6-6.6L1.6 8.8l6.8-.5z" fill="#e2e2e2"/></svg>
<svg style="left:498.0px;top:459.0px;" width="22" height="22" viewBox="0 0 22 22"><path d="M7 19A7.200 7.200 0 1 1 18.500 11.500" fill="none" stroke="#e2e2e2" stroke-width="3.2"/></svg>
<svg style="left:498.0px;top:489.0px;" width="22" height="22" viewBox="0 0 22 22"><path d="M11 2c.8 5 3.5 8 9 9c-5.5 1-8.2 4-9 9c-.8-5-3.500-8-9-9c5.500-1 8.200-4 9-9z" fill="#e2e2e2"/></svg>
<svg style="left:498.0px;top:519.0px;" width="22" height="22" viewBox="0 0 22 22"><rect x="9.300" y="1.800" width="3.400" height="5" rx=".8" fill="#e2e2e2" transform="rotate(0 11 11)"/><rect x="9.300" y="1.800" width="3.400" height="5" rx=".8" fill="#e2e2e2" transform="rotate(45 11 11)"/><rect x="9.300" y="1.800" width="3.400" height="5" rx=".8" fill="#e2e2e2" transform="rotate(90 11 11)"/><rect x="9.300" y="1.800" width="3.400" height="5" rx=".8" fill="#e2e2e2" transform="rotate(135 11 11)"/><rect x="9.300" y="1.800" width="3.400" height="5" rx=".8" fill="#e2e2e2" transform="rotate(180 11 11)"/><rect x="9.300" y="1.800" width="3.400" height="5" rx=".8" fill="#e2e2e2" transform="rotate(225 11 11)"/><rect x="9.300" y="1.800" width="3.400" height="5" rx=".8" fill="#e2e2e2" transform="rotate(270 11 11)"/><rect x="9.300" y="1.800" width="3.400" height="5" rx=".8" fill="#e2e2e2" transform="rotate(315 11 11)"/><circle cx="11" cy="11" r="6.3" fill="#e2e2e2"/><circle cx="11" cy="11" r="2.7" fill="#424242"/></svg>
<svg style="left:502px;top:565.5px;" width="13" height="11" viewBox="0 0 13 11"><path d="M1 .5l5 5l-5 5M7 .5l5 5l-5 5" fill="none" stroke="#bbb" stroke-width="1.2"/></svg>
<div style="left:530px;top:85px;width:1057px;height:22px;background:#1f1f1f;"></div>
<div style="left:530px;top:85px;width:87px;height:22px;background:#3c3c3c;border-radius:4px 4px 0 0;"></div>
<div class="t" style="top:86.5px;color:#e6e6e6;left:535.5px;letter-spacing:-0.55px;">Composition 1</div>
<div style="left:530px;top:107px;width:1057px;height:20px;background:#444;"></div>
<div style="left:530px;top:127px;width:20px;height:430px;background:#444;"></div>
<div class="t" style="top:106.7px;color:#bdbdbd;font-size:11px;left:535px;letter-spacing:0px;">px</div>
<svg style="left:550px;top:107px;overflow:hidden" width="1037" height="20" viewBox="0 0 1037 20"><g fill="#a6a6a6"><rect x="5.2" y="12" width="1" height="8"/><rect x="16.6" y="16.5" width="1" height="3.5"/><rect x="28.0" y="16.5" width="1" height="3.5"/><rect x="39.4" y="16.5" width="1" height="3.5"/><rect x="50.8" y="16.5" width="1" height="3.5"/><rect x="62.2" y="12" width="1" height="8"/><rect x="73.6" y="16.5" width="1" height="3.5"/><rect x="85.0" y="16.5" width="1" height="3.5"/><rect x="96.4" y="16.5" width="1" height="3.5"/><rect x="107.8" y="16.5" width="1" height="3.5"/><rect x="119.2" y="12" width="1" height="8"/><rect x="130.6" y="16.5" width="1" height="3.5"/><rect x="142.0" y="16.5" width="1" height="3.5"/><rect x="153.4" y="16.5" width="1" height="3.5"/><rect x="164.8" y="16.5" width="1" height="3.5"/><rect x="176.2" y="12" width="1" height="8"/><rect x="187.6" y="16.5" width="1" height="3.5"/><rect x="199.0" y="16.5" width="1" height="3.5"/><rect x="210.4" y="16.5" width="1" height="3.5"/><rect x="221.8" y="16.5" width="1" height="3.5"/><rect x="233.2" y="12" width="1" height="8"/><rect x="244.6" y="16.5" width="1" height="3.5"/><rect x="256.0" y="16.5" width="1" height="3.5"/><rect x="267.4" y="16.5" width="1" height="3.5"/><rect x="278.8" y="16.5" width="1" height="3.5"/><rect x="290.2" y="12" width="1" height="8"/><rect x="301.6" y="16.5" width="1" height="3.5"/><rect x="313.0" y="16.5" width="1" height="3.5"/><rect x="324.4" y="16.5" width="1" height="3.5"/><rect x="335.8" y="16.5" width="1" height="3.5"/><rect x="347.2" y="12" width="1" height="8"/><rect x="358.6" y="16.5" width="1" height="3.5"/><rect x="370.0" y="16.5" width="1" height="3.5"/><rect x="381.4" y="16.5" width="1" height="3.5"/><rect x="392.8" y="16.5" width="1" height="3.5"/><rect x="404.2" y="12" width="1" height="8"/><rect x="415.6" y="16.5" width="1" height="3.5"/><rect x="427.0" y="16.5" width="1" height="3.5"/><rect x="438.4" y="16.5" width="1" height="3.5"/><rect x="449.8" y="16.5" width="1" height="3.5"/><rect x="461.2" y="12" width="1" height="8"/><rect x="472.6" y="16.5" width="1" height="3.5"/><rect x="484.0" y="16.5" width="1" height="3.5"/><rect x="495.4" y="16.5" width="1" height="3.5"/><rect x="506.8" y="16.5" width="1" height="3.5"/><rect x="518.2" y="12" width="1" height="8"/><rect x="529.6" y="16.5" width="1" height="3.5"/><rect x="541.0" y="16.5" width="1" height="3.5"/><rect x="552.4" y="16.5" width="1" height="3.5"/><rect x="563.8" y="16.5" width="1" height="3.5"/><rect x="575.2" y="12" width="1" height="8"/><rect x="586.6" y="16.5" width="1" height="3.5"/><rect x="598.0" y="16.5" width="1" height="3.5"/><rect x="609.4" y="16.5" width="1" height="3.5"/><rect x="620.8" y="16.5" width="1" height="3.5"/><rect x="632.2" y="12" width="1" height="8"/><rect x="643.6" y="16.5" width="1" height="3.5"/><rect x="655.0" y="16.5" width="1" height="3.5"/><rect x="666.4" y="16.5" width="1" height="3.5"/><rect x="677.8" y="16.5" width="1" height="3.5"/><rect x="689.2" y="12" width="1" height="8"/><rect x="700.6" y="16.5" width="1" height="3.5"/><rect x="712.0" y="16.5" width="1" height="3.5"/><rect x="723.4" y="16.5" width="1" height="3.5"/><rect x="734.8" y="16.5" width="1" height="3.5"/><rect x="746.2" y="12" width="1" height="8"/><rect x="757.6" y="16.5" width="1" height="3.5"/><rect x="769.0" y="16.5" width="1" height="3.5"/><rect x="780.4" y="16.5" width="1" height="3.5"/><rect x="791.8" y="16.5" width="1" height="3.5"/><rect x="803.2" y="12" width="1" height="8"/><rect x="814.6" y="16.5" width="1" height="3.5"/><rect x="826.0" y="16.5" width="1" height="3.5"/><rect x="837.4" y="16.5" width="1" height="3.5"/><rect x="848.8" y="16.5" width="1" height="3.5"/><rect x="860.2" y="12" width="1" height="8"/><rect x="871.6" y="16.5" width="1" height="3.5"/><rect x="883.0" y="16.5" width="1" height="3.5"/><rect x="894.4" y="16.5" width="1" height="3.5"/><rect x="905.8" y="16.5" width="1" height="3.5"/><rect x="917.2" y="12" width="1" height="8"/><rect x="928.6" y="16.5" width="1" height="3.5"/><rect x="940.0" y="16.5" width="1" height="3.5"/><rect x="951.4" y="16.5" width="1" height="3.5"/><rect x="962.8" y="16.5" width="1" height="3.5"/><rect x="974.2" y="12" width="1" height="8"/><rect x="985.6" y="16.5" width="1" height="3.5"/><rect x="997.0" y="16.5" width="1" height="3.5"/><rect x="1008.4" y="16.5" width="1" height="3.5"/><rect x="1019.8" y="16.5" width="1" height="3.5"/><rect x="1031.2" y="12" width="1" height="8"/></g><g fill="#c4c4c4" font-size="10.5" letter-spacing="-0.2"><text x="62.7" y="10.800" text-anchor="middle">-1200</text><text x="119.7" y="10.800" text-anchor="middle">-1050</text><text x="176.7" y="10.800" text-anchor="middle">-900</text><text x="233.7" y="10.800" text-anchor="middle">-750</text><text x="290.7" y="10.800" text-anchor="middle">-600</text><text x="347.7" y="10.800" text-anchor="middle">-450</text><text x="404.7" y="10.800" text-anchor="middle">-300</text><text x="461.7" y="10.800" text-anchor="middle">-150</text><text x="518.7" y="10.800" text-anchor="middle">0</text><text x="575.7" y="10.800" text-anchor="middle">150</text><text x="632.7" y="10.800" text-anchor="middle">300</text><text x="689.7" y="10.800" text-anchor="middle">450</text><text x="746.7" y="10.800" text-anchor="middle">600</text><text x="803.7" y="10.800" text-anchor="middle">750</text><text x="860.7" y="10.800" text-anchor="middle">900</text><text x="917.7" y="10.800" text-anchor="middle">1050</text><text x="974.7" y="10.800" text-anchor="middle">1200</text><text x="1031.7" y="10.800" text-anchor="middle">1350</text></g></svg>
<svg style="left:530px;top:127px;overflow:hidden" width="20" height="430" viewBox="0 0 20 430"><g fill="#a6a6a6"><rect y="9.3" x="16" width="4" height="1"/><rect y="20.7" x="16" width="4" height="1"/><rect y="32.1" x="16" width="4" height="1"/><rect y="43.5" x="12" width="8" height="1"/><rect y="54.9" x="16" width="4" height="1"/><rect y="66.3" x="16" width="4" height="1"/><rect y="77.7" x="16" width="4" height="1"/><rect y="89.1" x="16" width="4" height="1"/><rect y="100.5" x="12" width="8" height="1"/><rect y="111.9" x="16" width="4" height="1"/><rect y="123.3" x="16" width="4" height="1"/><rect y="134.7" x="16" width="4" height="1"/><rect y="146.1" x="16" width="4" height="1"/><rect y="157.5" x="12" width="8" height="1"/><rect y="168.9" x="16" width="4" height="1"/><rect y="180.3" x="16" width="4" height="1"/><rect y="191.7" x="16" width="4" height="1"/><rect y="203.1" x="16" width="4" height="1"/><rect y="214.5" x="12" width="8" height="1"/><rect y="225.9" x="16" width="4" height="1"/><rect y="237.3" x="16" width="4" height="1"/><rect y="248.7" x="16" width="4" height="1"/><rect y="260.1" x="16" width="4" height="1"/><rect y="271.5" x="12" width="8" height="1"/><rect y="282.9" x="16" width="4" height="1"/><rect y="294.3" x="16" width="4" height="1"/><rect y="305.7" x="16" width="4" height="1"/><rect y="317.1" x="16" width="4" height="1"/><rect y="328.5" x="12" width="8" height="1"/><rect y="339.9" x="16" width="4" height="1"/><rect y="351.3" x="16" width="4" height="1"/><rect y="362.7" x="16" width="4" height="1"/><rect y="374.1" x="16" width="4" height="1"/><rect y="385.5" x="12" width="8" height="1"/><rect y="396.9" x="16" width="4" height="1"/><rect y="408.3" x="16" width="4" height="1"/><rect y="419.7" x="16" width="4" height="1"/></g><g fill="#c4c4c4" font-size="10.5" letter-spacing="-0.2"><text transform="translate(11.5 44.0) rotate(-90)" text-anchor="middle">450</text><text transform="translate(11.5 101.0) rotate(-90)" text-anchor="middle">300</text><text transform="translate(11.5 158.0) rotate(-90)" text-anchor="middle">150</text><text transform="translate(11.5 215.0) rotate(-90)" text-anchor="middle">0</text><text transform="translate(11.5 272.0) rotate(-90)" text-anchor="middle">-150</text><text transform="translate(11.5 329.0) rotate(-90)" text-anchor="middle">-300</text><text transform="translate(11.5 386.0) rotate(-90)" text-anchor="middle">-450</text></g></svg>
<div style="left:550px;top:127px;width:1037px;height:431px;background:#000;"></div>
<div style="left:703.5px;top:137px;width:729px;height:410px;background:#0a0a0a;"></div>
<div style="left:935px;top:209px;width:266px;height:266px;background:#666;"></div>
<div style="left:935px;top:271.2px;width:266px;height:141.6px;background:#00ffc8;border-radius:23.6px;"></div>
<div style="left:934.5px;top:270.7px;width:267px;height:142.6px;border:1px solid #35c978;"></div>
<div style="left:931.5px;top:267.7px;width:7px;height:7px;background:#fff;border:1px solid #6fd59a;"></div>
<div style="left:1197.5px;top:267.7px;width:7px;height:7px;background:#fff;border:1px solid #6fd59a;"></div>
<div style="left:931.5px;top:409.3px;width:7px;height:7px;background:#fff;border:1px solid #6fd59a;"></div>
<div style="left:1197.5px;top:409.3px;width:7px;height:7px;background:#fff;border:1px solid #6fd59a;"></div>
<svg style="left:1063px;top:337px;" width="10" height="10" viewBox="0 0 10 10"><circle cx="5" cy="5" r="4" fill="none" stroke="#0d5a48" stroke-width="1"/><circle cx="5" cy="5" r="1.200" fill="#0d5a48"/></svg>
<div style="left:935px;top:255.5px;width:9px;height:8.5px;background:#fde777;"></div>
<div class="t" style="top:250.2px;color:#ffffff;font-size:12px;left:947.3px;text-shadow:0 0 1.5px rgba(0,0,0,.8);letter-spacing:0px;">CenterRectangle</div>
<div class="t" style="top:457.4px;color:#ececec;font-size:12px;left:569.5px;letter-spacing:-0.37px;">Hold S</div>
<div class="t" style="top:457.4px;color:#585858;font-size:12px;left:605.4px;letter-spacing:-0.08px;">Direct Layer Selection</div>
<div class="t" style="top:471.4px;color:#ececec;font-size:12px;left:569.5px;letter-spacing:-0.42px;font-size:11.5px;">Space</div>
<div class="t" style="top:471.4px;color:#585858;font-size:12px;left:603px;letter-spacing:-0.17px;">Play/ Stop</div>
<div class="t" style="top:485.4px;color:#ececec;font-size:12px;left:569.5px;letter-spacing:-0.38px;">Space + click + drag</div>
<div class="t" style="top:485.4px;color:#585858;font-size:12px;left:673.7px;letter-spacing:-0.58px;">Pan</div>
<div class="t" style="top:499.4px;color:#ececec;font-size:12px;left:569.5px;letter-spacing:-0.15px;">Alt + click + drag</div>
<div class="t" style="top:499.4px;color:#585858;font-size:12px;left:658.8px;letter-spacing:-0.00px;">Move Pivot Point</div>
<div class="t" style="top:513.4px;color:#ececec;font-size:12px;left:569.5px;letter-spacing:-0.00px;">Shift</div>
<div class="t" style="top:513.4px;color:#585858;font-size:12px;left:596.5px;letter-spacing:-0.35px;">Enable Snapping</div>
<div class="t" style="top:533.4px;color:#ececec;left:998px;letter-spacing:-0.34px;">Viewport Quality: High</div>
<div style="left:530px;top:558px;width:1057px;height:22px;background:#444;"></div>
<div style="left:535px;top:561px;width:78px;height:16.5px;background:#2d2d2d;border-radius:3px;"></div>
<div class="t" style="top:560px;color:#e6e6e6;left:538.5px;letter-spacing:-0.34px;font-size:12.0px;">38%</div>
<svg style="left:600px;top:567px;" width="9" height="5" viewBox="0 0 9 5"><path d="M0.5 0.5l4 4l4-4" fill="none" stroke="#ddd" stroke-width="1.1"/></svg>
<div style="left:866.5px;top:559.5px;width:99.5px;height:19.2px;background:#2d2d2d;border-radius:4px;border:1px solid #262626;"></div>
<div style="left:886.0px;top:560.2px;width:1px;height:18px;background:#262626;"></div>
<div style="left:906.0px;top:560.2px;width:1px;height:18px;background:#262626;"></div>
<div style="left:926.0px;top:560.2px;width:1px;height:18px;background:#262626;"></div>
<div style="left:946.0px;top:560.2px;width:1px;height:18px;background:#262626;"></div>
<svg style="left:870.5px;top:563.5px;" width="12" height="12" viewBox="0 0 12 12"><rect x="1" y="1" width="1.5" height="10" fill="#e2e2e2"/><path d="M11 1v10L3.5 6z" fill="#e2e2e2"/></svg>
<svg style="left:890.5px;top:563.5px;" width="12" height="12" viewBox="0 0 12 12"><path d="M7.5 1v10L0.5 6z" fill="#e2e2e2"/><rect x="9" y="1" width="1.6" height="10" fill="#e2e2e2"/></svg>
<svg style="left:910.5px;top:563.5px;" width="12" height="12" viewBox="0 0 12 12"><path d="M2.500 1v10L10.500 6z" fill="#e2e2e2"/></svg>
<svg style="left:930.5px;top:563.5px;" width="12" height="12" viewBox="0 0 12 12"><rect x="1.4" y="1" width="1.6" height="10" fill="#e2e2e2"/><path d="M4.500 1v10L11.500 6z" fill="#e2e2e2"/></svg>
<svg style="left:950.5px;top:563.5px;" width="12" height="12" viewBox="0 0 12 12"><path d="M1 1v10L8.500 6z" fill="#e2e2e2"/><rect x="9.500" y="1" width="1.5" height="10" fill="#e2e2e2"/></svg>
<div style="left:971px;top:559.5px;width:20px;height:19.2px;background:#2d2d2d;border-radius:4px;border:1px solid #262626;"></div>
<svg style="left:974.5px;top:563.5px;" width="13" height="12" viewBox="0 0 13 12"><path d="M1 10.500v-6h8.500M7.500 1.500l3 3l-3 3" fill="none" stroke="#e2e2e2" stroke-width="1.3"/><path d="M1 10.500h10.500v-3" fill="none" stroke="#e2e2e2" stroke-width="1.3"/></svg>
<div style="left:1232.2px;top:560.2px;width:36.6px;height:17.3px;background:#2d2d2d;border-radius:3px;"></div>
<svg style="left:1235.5px;top:565px;" width="11" height="8" viewBox="0 0 11 8"><path d="M0 4L3.500 0H11v8H3.500z" fill="#e2e2e2"/><circle cx="4" cy="4" r="1.100" fill="#2d2d2d"/></svg>
<div class="t" style="top:559.5px;color:#9a9a9a;left:1111px;width:300px;text-align:center;">0</div>
<div style="left:1272.5px;top:559.5px;width:30.5px;height:19.2px;background:#2d2d2d;border-radius:4px;border:1px solid #262626;"></div>
<div style="left:1292.0px;top:560.2px;width:1px;height:18px;background:#262626;"></div>
<svg style="left:1295.0px;top:565.5px;" width="6" height="7" viewBox="0 0 6 7"><path d="M.5 .5l5 3l-5 3z" fill="none" stroke="#999" stroke-width="1"/></svg>
<svg style="left:1276px;top:563.5px;" width="14" height="12" viewBox="0 0 14 12"><path d="M0 4h2.500L6 1v10L2.500 8H0z" fill="#2ecc71"/><path d="M8 3.500a3.500 3.500 0 0 1 0 5M10 1.500a6 6 0 0 1 0 9" fill="none" stroke="#2ecc71" stroke-width="1.2"/></svg>
<div style="left:1307.8px;top:559.5px;width:30.5px;height:19.2px;background:#2d2d2d;border-radius:4px;border:1px solid #262626;"></div>
<div style="left:1308.8px;top:560.5px;width:18.5px;height:17.2px;background:#484848;border-radius:3px 0 0 3px;"></div>
<div style="left:1327.3px;top:560.2px;width:1px;height:18px;background:#262626;"></div>
<svg style="left:1330.3px;top:565.5px;" width="6" height="7" viewBox="0 0 6 7"><path d="M.5 .5l5 3l-5 3z" fill="none" stroke="#999" stroke-width="1"/></svg>
<svg style="left:1311px;top:563px;" width="13" height="13" viewBox="0 0 13 13"><path d="M4.500 11.500L2.200 7.500A3.800 3.800 0 0 1 8.800 3.700L11 7.500" fill="none" stroke="#d8d8d8" stroke-width="2.200"/><path d="M3.800 10.300L4.500 11.500M10.300 6.300L11 7.500" stroke="#fff" stroke-width="2.200"/></svg>
<div style="left:1342.8px;top:559.5px;width:30.5px;height:19.2px;background:#2d2d2d;border-radius:4px;border:1px solid #262626;"></div>
<div style="left:1343.8px;top:560.5px;width:18.5px;height:17.2px;background:#484848;border-radius:3px 0 0 3px;"></div>
<div style="left:1362.3px;top:560.2px;width:1px;height:18px;background:#262626;"></div>
<svg style="left:1365.3px;top:565.5px;" width="6" height="7" viewBox="0 0 6 7"><path d="M.5 .5l5 3l-5 3z" fill="none" stroke="#999" stroke-width="1"/></svg>
<svg style="left:1345.5px;top:563px;" width="14" height="14" viewBox="0 0 14 14"><path d="M4.500 0v13M9.500 0v13M0 4h14M0 9h14" stroke="#e2e2e2" stroke-width="1.100"/></svg>
<div style="left:1377.5px;top:559.5px;width:19.5px;height:19.2px;background:#2d2d2d;border-radius:4px;border:1px solid #262626;"></div>
<svg style="left:1380px;top:563.5px;" width="15" height="11" viewBox="0 0 15 11"><rect x="0" y="0" width="3.500" height="11" fill="#2ecc71"/><rect x="5" y="0.600" width="9.400" height="4.500" fill="none" stroke="#2ecc71" stroke-width="1.200"/><rect x="5" y="7" width="10" height="4" fill="#2ecc71"/></svg>
<div style="left:1400.6px;top:559.5px;width:19.5px;height:19.2px;background:#2d2d2d;border-radius:4px;border:1px solid #262626;"></div>
<div style="left:1401.6px;top:560.5px;width:17.5px;height:17.2px;background:#484848;border-radius:3px;"></div>
<svg style="left:1403.5px;top:564.5px;" width="14" height="9" viewBox="0 0 14 9"><path d="M0 0l5 4.500l-5 4.500z" fill="#d0d0d0"/><path d="M5 0l4.500 4.500l-4.500 4.500M9 0l4.500 4.500l-4.500 4.500" fill="none" stroke="#d0d0d0" stroke-width="1.500"/></svg>
<div style="left:1423.4px;top:559.5px;width:30.5px;height:19.2px;background:#2d2d2d;border-radius:4px;border:1px solid #262626;"></div>
<div style="left:1424.4px;top:560.5px;width:18.5px;height:17.2px;background:#484848;border-radius:3px 0 0 3px;"></div>
<div style="left:1442.9px;top:560.2px;width:1px;height:18px;background:#262626;"></div>
<svg style="left:1445.9px;top:565.5px;" width="6" height="7" viewBox="0 0 6 7"><path d="M.5 .5l5 3l-5 3z" fill="none" stroke="#999" stroke-width="1"/></svg>
<svg style="left:1426.5px;top:564px;" width="14" height="11" viewBox="0 0 14 11"><rect x=".6" y=".6" width="12.800" height="8" fill="none" stroke="#e2e2e2" stroke-width="1.200"/><rect x="0" y="9.500" width="14" height="1.500" fill="#e2e2e2"/></svg>
<div style="left:1458.4px;top:559.5px;width:30.5px;height:19.2px;background:#2d2d2d;border-radius:4px;border:1px solid #262626;"></div>
<div style="left:1459.4px;top:560.5px;width:18.5px;height:17.2px;background:#484848;border-radius:3px 0 0 3px;"></div>
<div style="left:1477.9px;top:560.2px;width:1px;height:18px;background:#262626;"></div>
<svg style="left:1480.9px;top:565.5px;" width="6" height="7" viewBox="0 0 6 7"><path d="M.5 .5l5 3l-5 3z" fill="none" stroke="#999" stroke-width="1"/></svg>
<svg style="left:1461.5px;top:563.5px;" width="14" height="12" viewBox="0 0 14 12"><path d="M.5 .5h8v5h-8zM3 7.500h8v-4M6 10.500h8v-4.500" fill="none" stroke="#8a8a8a" stroke-width="1.100"/></svg>
<div style="left:1493px;top:559.5px;width:30.5px;height:19.2px;background:#2d2d2d;border-radius:4px;border:1px solid #262626;"></div>
<div style="left:1494px;top:560.5px;width:18.5px;height:17.2px;background:#484848;border-radius:3px 0 0 3px;"></div>
<div style="left:1512.5px;top:560.2px;width:1px;height:18px;background:#262626;"></div>
<svg style="left:1515.5px;top:565.5px;" width="6" height="7" viewBox="0 0 6 7"><path d="M.5 .5l5 3l-5 3z" fill="none" stroke="#999" stroke-width="1"/></svg>
<svg style="left:1496px;top:563px;" width="14" height="13" viewBox="0 0 14 13"><rect x="0" y="0" width="8.500" height="8.500" fill="#e2e2e2"/><rect x="5.500" y="4.500" width="8" height="8" fill="#2d2d2d" stroke="#e2e2e2" stroke-width="1.200"/></svg>
<div style="left:1528px;top:559.5px;width:30.5px;height:19.2px;background:#2d2d2d;border-radius:4px;border:1px solid #262626;"></div>
<div style="left:1547.5px;top:560.2px;width:1px;height:18px;background:#262626;"></div>
<svg style="left:1550.5px;top:565.5px;" width="6" height="7" viewBox="0 0 6 7"><path d="M.5 .5l5 3l-5 3z" fill="none" stroke="#999" stroke-width="1"/></svg>
<svg style="left:1531.5px;top:563.5px;" width="12" height="12" viewBox="0 0 12 12"><rect x="0" y="0" width="3" height="3" fill="#2ecc71"/><rect x="6" y="0" width="3" height="3" fill="#2ecc71"/><rect x="3" y="3" width="3" height="3" fill="#2ecc71"/><rect x="9" y="3" width="3" height="3" fill="#2ecc71"/><rect x="0" y="6" width="3" height="3" fill="#2ecc71"/><rect x="6" y="6" width="3" height="3" fill="#2ecc71"/><rect x="3" y="9" width="3" height="3" fill="#2ecc71"/><rect x="9" y="9" width="3" height="3" fill="#2ecc71"/></svg>
<div style="left:1563.4px;top:559.5px;width:19.5px;height:19.2px;background:#2d2d2d;border-radius:4px;border:1px solid #262626;"></div>
<svg style="left:1566.2px;top:562.3px;" width="14" height="14" viewBox="0 0 14 14"><rect x="5.700" y="0" width="2.600" height="3.600" rx=".6" fill="#e2e2e2" transform="rotate(0 7 7)"/><rect x="5.700" y="0" width="2.600" height="3.600" rx=".6" fill="#e2e2e2" transform="rotate(45 7 7)"/><rect x="5.700" y="0" width="2.600" height="3.600" rx=".6" fill="#e2e2e2" transform="rotate(90 7 7)"/><rect x="5.700" y="0" width="2.600" height="3.600" rx=".6" fill="#e2e2e2" transform="rotate(135 7 7)"/><rect x="5.700" y="0" width="2.600" height="3.600" rx=".6" fill="#e2e2e2" transform="rotate(180 7 7)"/><rect x="5.700" y="0" width="2.600" height="3.600" rx=".6" fill="#e2e2e2" transform="rotate(225 7 7)"/><rect x="5.700" y="0" width="2.600" height="3.600" rx=".6" fill="#e2e2e2" transform="rotate(270 7 7)"/><rect x="5.700" y="0" width="2.600" height="3.600" rx=".6" fill="#e2e2e2" transform="rotate(315 7 7)"/><circle cx="7" cy="7" r="4.500" fill="#e2e2e2"/><circle cx="7" cy="7" r="2" fill="#2d2d2d"/></svg>
<div style="left:1593px;top:85px;width:321px;height:22px;background:#1f1f1f;"></div>
<div style="left:1593px;top:85px;width:39.5px;height:22px;background:#454545;border-radius:4px 4px 0 0;"></div>
<div class="t" style="top:86.5px;color:#e6e6e6;left:1598.5px;letter-spacing:-0.41px;">Color</div>
<div style="left:1634px;top:85px;width:67px;height:22px;background:#2c2c2c;border-radius:4px 4px 0 0;"></div>
<div class="t" style="top:86.5px;color:#e6e6e6;left:1639px;letter-spacing:-0.57px;font-size:12.5px;">Add Layers</div>
<div style="left:1593px;top:107px;width:321px;height:377px;background:#454545;"></div>
<div style="left:1902.5px;top:108.5px;width:9.5px;height:302px;background:#575757;border-radius:5px;"></div>
<div style="left:1646px;top:119.7px;width:200px;height:200px;border-radius:100px;background:conic-gradient(from 90deg,#f00 0deg,#f0f 60deg,#00f 120deg,#0ff 180deg,#0f0 240deg,#ff0 310deg,#f00 360deg);-webkit-mask:radial-gradient(circle,transparent 73.800px,#000 74.600px);mask:radial-gradient(circle,transparent 73.800px,#000 74.600px);"></div>
<div style="left:1702px;top:176px;width:90px;height:90px;background:linear-gradient(to right,#000,rgba(0,0,0,0)),linear-gradient(to bottom,#fff,#f00);"></div>
<svg style="left:1739px;top:170px;" width="12" height="12" viewBox="0 0 12 12"><circle cx="6" cy="6" r="5.3" fill="none" stroke="#f0f0f0" stroke-width="1.100"/></svg>
<svg style="left:1826.6px;top:213.7px;" width="12" height="12" viewBox="0 0 12 12"><circle cx="6" cy="6" r="5.3" fill="none" stroke="#f0f0f0" stroke-width="1.100"/></svg>
<div style="left:1600px;top:333px;width:22px;height:21.5px;background:#7a7a7a;border-radius:3px;"></div>
<div class="t" style="top:334.5px;color:#e6e6e6;left:1625px;letter-spacing:-0.40px;font-size:12.5px;">Gray</div>
<div style="left:1871px;top:333px;width:22px;height:21.5px;background:#2c2c2c;border-radius:4px;border:1px solid #262626;"></div>
<svg style="left:1876px;top:337.5px;" width="12" height="12" viewBox="0 0 12 12"><path d="M.5 11.500l1-2.800L7 3.200l1.800 1.800L3.300 10.500z" fill="none" stroke="#ccc" stroke-width="1"/><path d="M6.500 2.500l1.500-1.500a1.600 1.600 0 0 1 2.200 0l.8.8a1.600 1.600 0 0 1 0 2.200L9.500 5.500z" fill="#ddd"/></svg>
<div style="left:1600px;top:360.5px;width:49.5px;height:17px;background:#3a3a3a;border-radius:3px;border:1px solid #555;"></div>
<div class="t" style="top:359.5px;color:#e6e6e6;left:1603px;letter-spacing:-0.54px;">Hex</div>
<svg style="left:1636px;top:367px;" width="9" height="5" viewBox="0 0 9 5"><path d="M0.5 0.5l4 4l4-4" fill="none" stroke="#ddd" stroke-width="1.100"/></svg>
<div style="left:1653px;top:358.5px;width:240px;height:21.5px;background:#222;border-radius:3px;"></div>
<div class="t" style="top:359.5px;color:#555;font-size:12px;left:1658px;">#</div>
<div class="t" style="top:359.5px;color:#e6e6e6;left:1670px;letter-spacing:-0.37px;font-size:12.5px;">7a7a7a</div>
<div style="left:1600px;top:390.3px;width:234px;height:3.4px;background:#e4e4e4;border-radius:2px;"></div>
<svg style="left:1828px;top:386px;" width="12" height="12" viewBox="0 0 12 12"><circle cx="6" cy="6" r="5.200" fill="#86d0b6"/><circle cx="6" cy="6" r="2.200" fill="#55b092"/></svg>
<div style="left:1849px;top:384.5px;width:44px;height:15.5px;background:#2c2c2c;border-radius:3px;"></div>
<div class="t" style="top:382.5px;color:#5a5a5a;font-size:12px;left:1853px;">A</div>
<div class="t" style="top:382.5px;color:#e6e6e6;left:1866px;letter-spacing:-0.23px;">255</div>
<div style="left:1597px;top:406px;width:299.5px;height:22px;background:#1c1c1c;"></div>
<div style="left:1599px;top:408px;width:148px;height:19.5px;background:#454545;border-radius:4px 4px 0 0;"></div>
<div class="t" style="top:407.5px;color:#e6e6e6;left:1522.8px;width:300px;text-align:center;letter-spacing:-0.46px;font-size:12.5px;">Swatches</div>
<div style="left:1747px;top:408px;width:147.5px;height:19.5px;background:#2a2a2a;"></div>
<div class="t" style="top:407.5px;color:#c8c8c8;left:1670.5px;width:300px;text-align:center;letter-spacing:-0.45px;">Generator</div>
<div style="left:1598.4px;top:432px;width:256.2px;height:16.5px;background:#555;border-radius:3px;"></div>
<div style="left:1599.5px;top:432.5px;width:61.5px;height:15.5px;background:#222;border-radius:3px;"></div>
<svg style="left:1605px;top:435.5px;" width="11" height="9" viewBox="0 0 11 9"><path d="M1 0v9M4.500 0v9" stroke="#2ecc71" stroke-width="1.800"/><path d="M7 .5l3 8.500" stroke="#2ecc71" stroke-width="1.800"/></svg>
<div class="t" style="top:430.5px;color:#e6e6e6;left:1621px;letter-spacing:-0.32px;">Library</div>
<svg style="left:1671px;top:435.5px;" width="11" height="10" viewBox="0 0 11 10"><path d="M0 1h4l1 1.500h6v7.500H0z" fill="none" stroke="#ddd" stroke-width="1.200"/><path d="M2 5.500h7M2 7.700h7" stroke="#ddd" stroke-width="1"/></svg>
<div class="t" style="top:430.5px;color:#e6e6e6;left:1686px;letter-spacing:-0.28px;">Project</div>
<svg style="left:1738px;top:435px;" width="8" height="10" viewBox="0 0 8 10"><path d="M.6 .6h4.400l2.400 2.400v6.400H.6z" fill="none" stroke="#ddd" stroke-width="1.100"/></svg>
<div class="t" style="top:430.5px;color:#e6e6e6;left:1752px;letter-spacing:-0.61px;font-size:12.0px;">Scene</div>
<svg style="left:1801px;top:435.5px;" width="10" height="10" viewBox="0 0 10 10"><path d="M1 5a4 4 0 0 1 4-4h4v4a4 4 0 0 1-4 4H4a3 3 0 0 1-3-3z" fill="none" stroke="#ddd" stroke-width="1.100"/></svg>
<div class="t" style="top:430.5px;color:#e6e6e6;left:1816px;letter-spacing:-0.56px;font-size:12.5px;">Labels</div>
<div style="left:1858px;top:432px;width:36.5px;height:16.5px;background:#555;border-radius:3px;"></div>
<div style="left:1859px;top:432.5px;width:15.5px;height:15.5px;background:#222;border-radius:3px;"></div>
<svg style="left:1862.5px;top:436px;" width="9" height="9" viewBox="0 0 9 9"><g fill="#2ecc71"><rect width="3.600" height="3.600"/><rect x="5.400" width="3.600" height="3.600"/><rect y="5.400" width="3.600" height="3.600"/><rect x="5.400" y="5.400" width="3.600" height="3.600"/></g></svg>
<svg style="left:1881px;top:436px;" width="10" height="8" viewBox="0 0 10 8"><path d="M0 .6h10M0 4h10M0 7.400h10" stroke="#ddd" stroke-width="1.100"/></svg>
<div style="left:1598.4px;top:452.6px;width:274.6px;height:16.4px;background:#3a3a3a;border-radius:3px;border:1px solid #555;"></div>
<div class="t" style="top:451.8px;color:#e6e6e6;left:1601px;letter-spacing:-0.45px;">new</div>
<svg style="left:1860.5px;top:458.5px;" width="9" height="5" viewBox="0 0 9 5"><path d="M0.5 0.5l4 4l4-4" fill="none" stroke="#ddd" stroke-width="1.100"/></svg>
<div style="left:1880.0px;top:460.3px;width:2px;height:2px;background:#ddd;"></div>
<div style="left:1884.8px;top:460.3px;width:2px;height:2px;background:#ddd;"></div>
<div style="left:1889.6px;top:460.3px;width:2px;height:2px;background:#ddd;"></div>
<div style="left:1598.4px;top:470px;width:296px;height:14px;background:#2a2a2a;"></div>
<div style="left:1600.0px;top:471.5px;width:18px;height:12.5px;background:#9b51f5;border-radius:3px 3px 0 0;"></div>
<div style="left:1621.98px;top:471.5px;width:18px;height:12.5px;background:#4a9df8;border-radius:3px 3px 0 0;"></div>
<div style="left:1643.96px;top:471.5px;width:18px;height:12.5px;background:#ff7a52;border-radius:3px 3px 0 0;"></div>
<div style="left:1665.94px;top:471.5px;width:18px;height:12.5px;background:#4dfdac;border-radius:3px 3px 0 0;"></div>
<div style="left:1687.92px;top:471.5px;width:18px;height:12.5px;background:#fb4b5c;border-radius:3px 3px 0 0;"></div>
<div style="left:1709.9px;top:471.5px;width:18px;height:12.5px;background:#fd4dba;border-radius:3px 3px 0 0;"></div>
<div style="left:1731.88px;top:471.5px;width:18px;height:12.5px;background:#fdd24f;border-radius:3px 3px 0 0;"></div>
<div style="left:1753.8600000000001px;top:471.5px;width:18px;height:12.5px;background:#4265d9;border-radius:3px 3px 0 0;"></div>
<div style="left:1775.84px;top:471.5px;width:18px;height:12.5px;background:#5ee0d4;border-radius:3px 3px 0 0;"></div>
<div style="left:1797.82px;top:471.5px;width:18px;height:12.5px;background:#d880d4;border-radius:3px 3px 0 0;"></div>
<div style="left:1819.8px;top:471.5px;width:18px;height:12.5px;background:#b4ec90;border-radius:3px 3px 0 0;"></div>
<div style="left:1841.78px;top:471.5px;width:18px;height:12.5px;background:#6a52f5;border-radius:3px 3px 0 0;"></div>
<div style="left:1593px;top:490.5px;width:321px;height:21.5px;background:#1f1f1f;"></div>
<div style="left:1593px;top:490.5px;width:38px;height:21.5px;background:#454545;border-radius:4px 4px 0 0;"></div>
<div class="t" style="top:491.5px;color:#e6e6e6;left:1598.5px;letter-spacing:-0.38px;">Align</div>
<div style="left:1593px;top:512px;width:321px;height:68px;background:#454545;"></div>
<div class="t" style="top:521.7px;color:#e6e6e6;left:1601px;letter-spacing:-0.42px;">Alignment</div>
<div class="t" style="top:549.5px;color:#e6e6e6;left:1601px;letter-spacing:-0.13px;">Distribution</div>
<div style="left:1790.5px;top:522.4px;width:53.2px;height:17.2px;background:#2c2c2c;border-radius:4px;border:1px solid #262626;"></div>
<div style="left:1852.4px;top:522.4px;width:53.2px;height:17.2px;background:#2c2c2c;border-radius:4px;border:1px solid #262626;"></div>
<div style="left:1790.5px;top:550.3px;width:53.2px;height:17.2px;background:#2c2c2c;border-radius:4px;border:1px solid #262626;"></div>
<div style="left:1807.7px;top:522.9px;width:1px;height:16.2px;background:#262626;"></div>
<div style="left:1825.4px;top:522.9px;width:1px;height:16.2px;background:#262626;"></div>
<div style="left:1869.6px;top:522.9px;width:1px;height:16.2px;background:#262626;"></div>
<div style="left:1887.3px;top:522.9px;width:1px;height:16.2px;background:#262626;"></div>
<div style="left:1807.7px;top:550.8px;width:1px;height:16.2px;background:#262626;"></div>
<div style="left:1825.4px;top:550.8px;width:1px;height:16.2px;background:#262626;"></div>
<svg style="left:1790.5px;top:522.4px;" width="17.7" height="17.2" viewBox="0 0 17.7 17.2"><g fill="#e8e8e8"><rect x="2.4" y="2.5" width="1.2" height="13"/><rect x="5.6" y="5.6" width="5.7" height="2.1"/><rect x="5.6" y="10.5" width="9.9" height="2.1"/></g></svg>
<svg style="left:1808.2px;top:522.4px;" width="17.7" height="17.2" viewBox="0 0 17.7 17.2"><g fill="#e8e8e8"><rect x="8.4" y="2.5" width="1.2" height="13"/><rect x="5.7" y="5.6" width="7" height="2.1"/><rect x="3.5" y="10.5" width="10.9" height="2.1"/></g></svg>
<svg style="left:1825.9px;top:522.4px;" width="17.7" height="17.2" viewBox="0 0 17.7 17.2"><g fill="#e8e8e8"><rect x="14.2" y="2.5" width="1.2" height="13"/><rect x="5.9" y="5.6" width="6" height="2.1"/><rect x="2" y="10.5" width="9.9" height="2.1"/></g></svg>
<svg style="left:1852.4px;top:522.4px;" width="17.7" height="17.2" viewBox="0 0 17.7 17.2"><g fill="#e8e8e8"><rect x="1.4" y="2.7" width="13.4" height="1.2"/><rect x="4.6" y="6" width="1.9" height="9.5"/><rect x="9.8" y="6" width="1.9" height="5.6"/></g></svg>
<svg style="left:1870.1px;top:522.4px;" width="17.7" height="17.2" viewBox="0 0 17.7 17.2"><g fill="#e8e8e8"><rect x="2" y="8.5" width="13" height="1.2"/><rect x="5.1" y="3.9" width="1.9" height="10.5"/><rect x="10" y="6" width="1.9" height="6.3"/></g></svg>
<svg style="left:1887.8px;top:522.4px;" width="17.7" height="17.2" viewBox="0 0 17.7 17.2"><g fill="#e8e8e8"><rect x="3.2" y="14.5" width="13" height="1.2"/><rect x="6.4" y="6.7" width="1.8" height="6"/><rect x="11.3" y="2.8" width="1.8" height="9.9"/></g></svg>
<svg style="left:1790.5px;top:550.3px;" width="17.7" height="17.2" viewBox="0 0 17.7 17.2"><g fill="#e8e8e8"><rect x="2.3" y="1" width="1.1" height="14.8"/><rect x="13.6" y="1" width="1.1" height="14.8"/><rect x="7.4" y="4.6" width="2.4" height="8.4"/></g></svg>
<svg style="left:1808.2px;top:550.3px;" width="17.7" height="17.2" viewBox="0 0 17.7 17.2"><g fill="#e8e8e8"><rect x="1.4" y="2.9" width="14.4" height="1.1"/><rect x="1.4" y="13.9" width="14.4" height="1.1"/><rect x="4.6" y="7.7" width="8.1" height="2.1"/></g></svg>
<svg style="left:1825.9px;top:550.3px;" width="17.7" height="17.2" viewBox="0 0 17.7 17.2"><g fill="#e8e8e8"><rect x="3.7" y="8.8" width="2" height="4.2"/><rect x="7.9" y="7" width="1.9" height="3.9"/><rect x="12" y="4.9" width="1.9" height="3.9"/></g></svg>
<svg style="left:1825.9px;top:550.3px;" width="17.7" height="17.2" viewBox="0 0 17.7 17.2"><path d="M2 4.500V3A1.500 1.500 0 0 1 3.500 1.500H5M12.500 1.500H14A1.500 1.500 0 0 1 15.500 3V4.500M15.500 12.500V14A1.500 1.500 0 0 1 14 15.500H12.500M5 15.500H3.500A1.500 1.500 0 0 1 2 14V12.500" fill="none" stroke="#e8e8e8" stroke-width="1.100"/></svg>
<div style="left:494px;top:586px;width:1420px;height:22px;background:#1f1f1f;"></div>
<div style="left:494px;top:586px;width:88.5px;height:22px;background:#454545;border-radius:4px 4px 0 0;"></div>
<div class="t" style="top:588px;color:#e6e6e6;left:499.5px;letter-spacing:-0.45px;font-size:12.5px;">Scene Window</div>
<div style="left:584.5px;top:586px;width:99.5px;height:22px;background:#2c2c2c;border-radius:4px 4px 0 0;"></div>
<div class="t" style="top:588px;color:#e6e6e6;left:589.5px;letter-spacing:-0.54px;">JavaScript Editor</div>
<div style="left:685.5px;top:586px;width:111.5px;height:22px;background:#2c2c2c;border-radius:4px 4px 0 0;"></div>
<div class="t" style="top:588px;color:#e6e6e6;left:690.5px;letter-spacing:-0.46px;font-size:12.5px;">Dependency Graph</div>
<div style="left:494px;top:608px;width:1420px;height:390px;background:#444;"></div>
<div style="left:1197.5px;top:608px;width:716.5px;height:368px;background:#262626;"></div>
<div style="left:498.7px;top:609.4px;width:1410.3px;height:20.4px;background:#464646;border-radius:0 4px 4px 0;"></div>
<div class="t" style="top:609.5px;color:#e6e6e6;left:1166px;letter-spacing:-0.55px;">Composition 1</div>
<div style="left:494px;top:673px;width:699px;height:290px;background:#2a2a2a;"></div>
<div style="left:494px;top:693px;width:683px;height:89px;background:#383838;"></div>
<div style="left:495.8px;top:632px;width:488.5px;height:20px;background:#262626;border-radius:10px;"></div>
<svg style="left:500px;top:635px;" width="14" height="14" viewBox="0 0 14 14"><circle cx="5.5" cy="5.5" r="4.5" fill="none" stroke="#ddd" stroke-width="1.200"/><path d="M9 9l3.500 3.500" stroke="#ddd" stroke-width="1.800"/></svg>
<div class="t" style="top:632.5px;color:#8a8a8a;left:520px;letter-spacing:-0.45px;font-size:12.5px;">Enter a layer name</div>
<div style="left:987.5px;top:632px;width:19px;height:19px;background:#2d2d2d;border-radius:4px;border:1px solid #262626;"></div>
<svg style="left:992px;top:637px;" width="10" height="10" viewBox="0 0 10 10"><path d="M5 0v10M0 5h10" stroke="#eee" stroke-width="1.700"/></svg>
<svg style="left:1003px;top:648px;" width="3" height="3" viewBox="0 0 3 3"><path d="M3 0v3h-3z" fill="#2ecc71"/></svg>
<div style="left:1031px;top:632px;width:19px;height:19px;background:#2d2d2d;border-radius:4px;border:1px solid #262626;"></div>
<div style="left:1053px;top:632px;width:19px;height:19px;background:#2d2d2d;border-radius:4px;border:1px solid #262626;"></div>
<div style="left:1075px;top:632px;width:19px;height:19px;background:#2d2d2d;border-radius:4px;border:1px solid #262626;"></div>
<svg style="left:1034px;top:635px;" width="13" height="13" viewBox="0 0 13 13"><circle cx="4.500" cy="8.500" r="4" fill="none" stroke="#666" stroke-width="1.200"/><circle cx="6" cy="7" r="4" fill="none" stroke="#8a8a8a" stroke-width="1.200"/><circle cx="8.500" cy="4.500" r="4" fill="#d8d8d8"/></svg>
<svg style="left:1056px;top:635.5px;" width="13" height="13" viewBox="0 0 13 13"><g fill="#e0e0e0"><circle cx="2" cy="2" r="1.100"/><circle cx="7.500" cy="1.600" r="1.100"/><circle cx="1.600" cy="7.500" r="1.100"/></g><path d="M8 4.5Q8 8.5 12 8.5Q8 8.5 8 12.5Q8 8.5 4 8.5Q8 8.5 8 4.5z" fill="#e0e0e0" stroke="#e0e0e0" stroke-width=".8" stroke-linejoin="round"/><path d="M13 10v3h-3z" fill="#2ecc71"/></svg>
<svg style="left:1078px;top:636px;" width="13" height="12" viewBox="0 0 13 12"><path d="M0 1.500h13M0 6h13M0 10.500h13" stroke="#ddd" stroke-width="1" stroke-dasharray="3 1.500"/><circle cx="8" cy="1.500" r="1.700" fill="#2d2d2d" stroke="#ddd"/><circle cx="5" cy="6" r="1.700" fill="#2d2d2d" stroke="#ddd"/><circle cx="9" cy="10.500" r="1.700" fill="#2d2d2d" stroke="#ddd"/></svg>
<div style="left:1095px;top:628px;width:95.5px;height:27.5px;background:#262626;border:3px solid #b2e024;"></div>
<div class="t" style="top:632.5px;color:#484848;font-size:12px;left:1102px;">F</div>
<div class="t" style="top:632.5px;color:#e6e6e6;left:1114px;letter-spacing:-0.48px;">20</div>
<svg style="left:500.5px;top:657.3px;" width="9" height="11" viewBox="0 0 9 11"><rect x="0" y="4.500" width="9" height="6.500" rx="1" fill="#ddd"/><path d="M2 4.500V3a2.500 2.500 0 0 1 5 0v1.500" fill="none" stroke="#ddd" stroke-width="1.300"/><circle cx="4.500" cy="7.500" r="1" fill="#444"/></svg>
<svg style="left:517px;top:659.0px;" width="14" height="9" viewBox="0 0 14 9"><path d="M.5 4.500C3 1 5 .6 7 .6S11 1 13.500 4.500C11 8 9 8.400 7 8.400S3 8 .5 4.500z" fill="none" stroke="#c8c8c8" stroke-width="1.100"/><circle cx="7" cy="4.500" r="2.200" fill="#c8c8c8"/></svg>
<svg style="left:536.5px;top:657px;" width="13" height="13" viewBox="0 0 13 13"><path d="M6.500 .6l5.700 3v6.300l-5.700 3l-5.700-3V3.600zM.8 3.600l5.700 3l5.700-3M6.500 6.600v6.300" fill="none" stroke="#ddd" stroke-width="1.100"/></svg>
<svg style="left:555.5px;top:658px;" width="14" height="11" viewBox="0 0 14 11"><path d="M0 3.500h2.500L6 .5v10L2.500 7.500H0z" fill="#ddd"/><path d="M8 3a3.500 3.500 0 0 1 0 5M10 1a6 6 0 0 1 0 9" fill="none" stroke="#ddd" stroke-width="1.200"/></svg>
<svg style="left:575px;top:657.3px;" width="12" height="12" viewBox="0 0 12 12"><path d="M.5 11.500l1-2.800L7 3.200l1.800 1.800L3.300 10.500z" fill="none" stroke="#bbb" stroke-width="1"/><path d="M6.500 2.500l1.500-1.500a1.600 1.600 0 0 1 2.200 0l.8.8a1.600 1.600 0 0 1 0 2.200L9.500 5.500z" fill="#ddd"/></svg>
<svg style="left:593.6px;top:660.0px;" width="13" height="7" viewBox="0 0 13 7"><path d="M0 3.500L3.500 0H13v7H3.500z" fill="#ddd"/><circle cx="4" cy="3.500" r="1.100" fill="#444"/></svg>
<div class="t" style="top:653.8px;color:#e6e6e6;left:649.4px;letter-spacing:-0.56px;font-size:12.5px;">Name</div>
<div style="left:494px;top:673px;width:683px;height:20px;background:#5a5443;"></div>
<div style="left:496.2px;top:674.5px;width:17.5px;height:17px;background:#2a2a2a;border-radius:2px;"></div>
<div style="left:514.7px;top:674.5px;width:18px;height:17px;background:#2a2a2a;border-radius:2px;"></div>
<div style="left:534.1px;top:674.5px;width:17.7px;height:17px;background:#2a2a2a;border-radius:2px;"></div>
<svg style="left:516.7px;top:678.5px;" width="14" height="9" viewBox="0 0 14 9"><path d="M.5 4.500C3 1 5 .6 7 .6S11 1 13.500 4.500C11 8 9 8.400 7 8.400S3 8 .5 4.500z" fill="none" stroke="#c8c8c8" stroke-width="1.100"/><circle cx="7" cy="4.500" r="2.200" fill="#c8c8c8"/></svg>
<div style="left:573px;top:674.5px;width:16.2px;height:17px;background:#fde47a;border-radius:3px;"></div>
<svg style="left:593.6px;top:679.5px;" width="13" height="7" viewBox="0 0 13 7"><path d="M0 3.500L3.500 0H13v7H3.500z" fill="#ddd"/><circle cx="4" cy="3.500" r="1.100" fill="#5a5443"/></svg>
<div style="left:610px;top:674.5px;width:32px;height:17px;background:#2a2a2a;border-radius:2px;"></div>
<svg style="left:613.5px;top:681px;" width="9" height="5" viewBox="0 0 9 5"><path d="M0.5 0.5l4 4l4-4" fill="none" stroke="#999" stroke-width="1.200"/></svg>
<svg style="left:631px;top:680px;" width="6" height="6" viewBox="0 0 6 6"><circle cx="3" cy="3" r="3" fill="#eee"/></svg>
<svg style="left:648.5px;top:676.5px;" width="13" height="13" viewBox="0 0 13 13"><path d="M3.500 .8h6M3.500 12.200h6M.8 3.500v6M12.200 3.500v6" stroke="#f3e06a" stroke-width="1.100"/><g fill="#ddd"><rect width="1.600" height="1.600"/><rect x="11.400" width="1.600" height="1.600"/><rect y="11.400" width="1.600" height="1.600"/><rect x="11.400" y="11.400" width="1.600" height="1.600"/></g></svg>
<div class="t" style="top:673.8px;color:#e6e6e6;left:667.3px;letter-spacing:-0.59px;">CenterRectangle</div>
<svg style="left:1164.5px;top:678px;" width="10" height="10" viewBox="0 0 10 10"><circle cx="5" cy="5" r="3.900" fill="none" stroke="#8a8a8a" stroke-width="1.100"/></svg>
<div style="left:494px;top:695.5px;width:683px;height:20px;background:#383838;"></div>
<div style="left:634px;top:705.0px;width:9px;height:1px;border-top:1px dotted #ccc;"></div>
<div class="t" style="top:696.0px;color:#e6e6e6;left:647.5px;letter-spacing:-0.49px;font-size:12.5px;">Rectangle.Corner Radius</div>
<div style="left:1081.3px;top:697.5px;width:83.5px;height:16px;background:#2a2a2a;border-radius:3px;"></div>
<div class="t" style="top:696.0px;color:#707070;font-size:12px;left:1086px;">#</div>
<div class="t" style="top:696.0px;color:#e6e6e6;left:1098.2px;letter-spacing:-0.58px;">62.0</div>
<svg style="left:1152.7px;top:701.5px;" width="8" height="8" viewBox="0 0 8 8"><path d="M4 0l4 4l-4 4l-4-4z" fill="#e0e0e0"/></svg>
<div style="left:1164.8px;top:697.5px;width:9.5px;height:16px;background:#2a2a2a;border-radius:0 3px 3px 0;"></div>
<svg style="left:1166.5px;top:702.0px;" width="6" height="7" viewBox="0 0 6 7"><path d="M0 0l6 3.500l-6 3.500z" fill="#9a9a9a"/></svg>
<div style="left:494px;top:717.5px;width:683px;height:20px;background:#383838;"></div>
<div style="left:634px;top:727.0px;width:9px;height:1px;border-top:1px dotted #ccc;"></div>
<div class="t" style="top:718.0px;color:#e6e6e6;left:647.5px;letter-spacing:-0.60px;font-size:12.5px;">Rectangle.Size.H</div>
<div style="left:1081.3px;top:719.5px;width:83.5px;height:16px;background:#2a2a2a;border-radius:3px;"></div>
<div class="t" style="top:718.0px;color:#707070;font-size:12px;left:1085px;">H</div>
<div class="t" style="top:718.0px;color:#e6e6e6;left:1098.2px;letter-spacing:-0.50px;">372.727</div>
<svg style="left:1152.7px;top:723.5px;" width="8" height="8" viewBox="0 0 8 8"><path d="M4 0l4 4l-4 4l-4-4z" fill="#e0e0e0"/></svg>
<div style="left:1164.8px;top:719.5px;width:9.5px;height:16px;background:#2a2a2a;border-radius:0 3px 3px 0;"></div>
<svg style="left:1166.5px;top:724.0px;" width="6" height="7" viewBox="0 0 6 7"><path d="M0 0l6 3.500l-6 3.500z" fill="#9a9a9a"/></svg>
<div style="left:494px;top:739px;width:683px;height:20px;background:#383838;"></div>
<div style="left:634px;top:748.5px;width:9px;height:1px;border-top:1px dotted #ccc;"></div>
<div class="t" style="top:739.5px;color:#e6e6e6;left:647.5px;letter-spacing:-0.62px;font-size:12.5px;">Rectangle.Size.W</div>
<div style="left:1081.3px;top:741px;width:83.5px;height:16px;background:#2a2a2a;border-radius:3px;"></div>
<div class="t" style="top:739.5px;color:#707070;font-size:12px;left:1083.5px;">W</div>
<div class="t" style="top:739.5px;color:#e6e6e6;left:1098.2px;letter-spacing:-0.51px;">700.0</div>
<svg style="left:1152.7px;top:745px;" width="8" height="8" viewBox="0 0 8 8"><path d="M4 0l4 4l-4 4l-4-4z" fill="#2ecc71"/></svg>
<div style="left:1164.8px;top:741px;width:9.5px;height:16px;background:#2a2a2a;border-radius:0 3px 3px 0;"></div>
<svg style="left:1166.5px;top:745.5px;" width="6" height="7" viewBox="0 0 6 7"><path d="M0 0l6 3.500l-6 3.500z" fill="#9a9a9a"/></svg>
<div style="left:634px;top:693.5px;width:1px;height:55px;border-left:1px dotted #ccc;"></div>
<div style="left:494px;top:761.5px;width:683px;height:20px;background:#383838;"></div>
<div style="left:496.2px;top:763.0px;width:17.5px;height:17px;background:#2a2a2a;border-radius:2px;"></div>
<div style="left:514.7px;top:763.0px;width:18px;height:17px;background:#2a2a2a;border-radius:2px;"></div>
<div style="left:534.1px;top:763.0px;width:17.7px;height:17px;background:#2a2a2a;border-radius:2px;"></div>
<svg style="left:516.7px;top:767.0px;" width="14" height="9" viewBox="0 0 14 9"><path d="M.5 4.500C3 1 5 .6 7 .6S11 1 13.500 4.500C11 8 9 8.400 7 8.400S3 8 .5 4.500z" fill="none" stroke="#c8c8c8" stroke-width="1.100"/><circle cx="7" cy="4.500" r="2.200" fill="#c8c8c8"/></svg>
<div style="left:573px;top:763.0px;width:16.2px;height:17px;background:#fde47a;border-radius:3px;"></div>
<svg style="left:593.6px;top:768.0px;" width="13" height="7" viewBox="0 0 13 7"><path d="M0 3.500L3.500 0H13v7H3.500z" fill="#ddd"/><circle cx="4" cy="3.500" r="1.100" fill="#383838"/></svg>
<svg style="left:648.5px;top:765.0px;" width="13" height="13" viewBox="0 0 13 13"><path d="M3.500 .8h6M3.500 12.200h6M.8 3.500v6M12.200 3.500v6" stroke="#f3e06a" stroke-width="1.100"/><g fill="#ddd"><rect width="1.600" height="1.600"/><rect x="11.400" width="1.600" height="1.600"/><rect y="11.400" width="1.600" height="1.600"/><rect x="11.400" y="11.400" width="1.600" height="1.600"/></g></svg>
<div class="t" style="top:762.3px;color:#e6e6e6;left:667.3px;letter-spacing:-0.56px;font-size:12.5px;">RectangleBG</div>
<svg style="left:1164.5px;top:766.5px;" width="10" height="10" viewBox="0 0 10 10"><circle cx="5" cy="5" r="3.900" fill="none" stroke="#8a8a8a" stroke-width="1.100"/></svg>
<div style="left:624px;top:735px;width:557.5px;height:29px;border:3px solid #b2e024;"></div>
<div style="left:1181.5px;top:673px;width:9.5px;height:288px;background:#555;border-radius:5px;"></div>
<div style="left:494.5px;top:964.5px;width:683.5px;height:9.5px;background:#555;border-radius:5px;"></div>
<div style="left:1193px;top:628px;width:4.5px;height:348px;background:#222;"></div>
<div style="left:1194.5px;top:812px;width:1.5px;height:1.5px;background:#999;"></div>
<div style="left:1194.5px;top:817px;width:1.5px;height:1.5px;background:#999;"></div>
<div style="left:1194.5px;top:822px;width:1.5px;height:1.5px;background:#999;"></div>
<div style="left:1197.5px;top:654px;width:716.5px;height:310px;background:#2a2a2a;"></div>
<div style="left:1907.2px;top:654px;width:6.8px;height:310px;background:#222;"></div>
<svg style="left:1197.500px;top:629.500px;overflow:hidden" width="716" height="24" viewBox="0 0 716 24"><g fill="#9a9a9a"><rect x="9.20" y="16.5" width="1" height="7.5"/><rect x="17.60" y="20.5" width="1" height="3.5"/><rect x="26.00" y="20.5" width="1" height="3.5"/><rect x="34.40" y="20.5" width="1" height="3.5"/><rect x="42.80" y="20.5" width="1" height="3.5"/><rect x="51.20" y="16.5" width="1" height="7.5"/><rect x="59.60" y="20.5" width="1" height="3.5"/><rect x="68.00" y="20.5" width="1" height="3.5"/><rect x="76.40" y="20.5" width="1" height="3.5"/><rect x="84.80" y="20.5" width="1" height="3.5"/><rect x="93.20" y="16.5" width="1" height="7.5"/><rect x="101.60" y="20.5" width="1" height="3.5"/><rect x="110.00" y="20.5" width="1" height="3.5"/><rect x="118.40" y="20.5" width="1" height="3.5"/><rect x="126.80" y="20.5" width="1" height="3.5"/><rect x="135.20" y="16.5" width="1" height="7.5"/><rect x="143.60" y="20.5" width="1" height="3.5"/><rect x="152.00" y="20.5" width="1" height="3.5"/><rect x="160.40" y="20.5" width="1" height="3.5"/><rect x="168.80" y="20.5" width="1" height="3.5"/><rect x="177.20" y="16.5" width="1" height="7.5"/><rect x="185.60" y="20.5" width="1" height="3.5"/><rect x="194.00" y="20.5" width="1" height="3.5"/><rect x="202.40" y="20.5" width="1" height="3.5"/><rect x="210.80" y="20.5" width="1" height="3.5"/><rect x="219.20" y="16.5" width="1" height="7.5"/><rect x="227.60" y="20.5" width="1" height="3.5"/><rect x="236.00" y="20.5" width="1" height="3.5"/><rect x="244.40" y="20.5" width="1" height="3.5"/><rect x="252.80" y="20.5" width="1" height="3.5"/><rect x="261.20" y="16.5" width="1" height="7.5"/><rect x="269.60" y="20.5" width="1" height="3.5"/><rect x="278.00" y="20.5" width="1" height="3.5"/><rect x="286.40" y="20.5" width="1" height="3.5"/><rect x="294.80" y="20.5" width="1" height="3.5"/><rect x="303.20" y="16.5" width="1" height="7.5"/><rect x="311.60" y="20.5" width="1" height="3.5"/><rect x="320.00" y="20.5" width="1" height="3.5"/><rect x="328.40" y="20.5" width="1" height="3.5"/><rect x="336.80" y="20.5" width="1" height="3.5"/><rect x="345.20" y="16.5" width="1" height="7.5"/><rect x="353.60" y="20.5" width="1" height="3.5"/><rect x="362.00" y="20.5" width="1" height="3.5"/><rect x="370.40" y="20.5" width="1" height="3.5"/><rect x="378.80" y="20.5" width="1" height="3.5"/><rect x="387.20" y="16.5" width="1" height="7.5"/><rect x="395.60" y="20.5" width="1" height="3.5"/><rect x="404.00" y="20.5" width="1" height="3.5"/><rect x="412.40" y="20.5" width="1" height="3.5"/><rect x="420.80" y="20.5" width="1" height="3.5"/><rect x="429.20" y="16.5" width="1" height="7.5"/><rect x="437.60" y="20.5" width="1" height="3.5"/><rect x="446.00" y="20.5" width="1" height="3.5"/><rect x="454.40" y="20.5" width="1" height="3.5"/><rect x="462.80" y="20.5" width="1" height="3.5"/><rect x="471.20" y="16.5" width="1" height="7.5"/><rect x="479.60" y="20.5" width="1" height="3.5"/><rect x="488.00" y="20.5" width="1" height="3.5"/><rect x="496.40" y="20.5" width="1" height="3.5"/><rect x="504.80" y="20.5" width="1" height="3.5"/><rect x="513.20" y="16.5" width="1" height="7.5"/><rect x="521.60" y="20.5" width="1" height="3.5"/><rect x="530.00" y="20.5" width="1" height="3.5"/><rect x="538.40" y="20.5" width="1" height="3.5"/><rect x="546.80" y="20.5" width="1" height="3.5"/><rect x="555.20" y="16.5" width="1" height="7.5"/><rect x="563.60" y="20.5" width="1" height="3.5"/><rect x="572.00" y="20.5" width="1" height="3.5"/><rect x="580.40" y="20.5" width="1" height="3.5"/><rect x="588.80" y="20.5" width="1" height="3.5"/><rect x="597.20" y="16.5" width="1" height="7.5"/><rect x="605.60" y="20.5" width="1" height="3.5"/><rect x="614.00" y="20.5" width="1" height="3.5"/><rect x="622.40" y="20.5" width="1" height="3.5"/><rect x="630.80" y="20.5" width="1" height="3.5"/><rect x="639.20" y="16.5" width="1" height="7.5"/><rect x="647.60" y="20.5" width="1" height="3.5"/><rect x="656.00" y="20.5" width="1" height="3.5"/><rect x="664.40" y="20.5" width="1" height="3.5"/><rect x="672.80" y="20.5" width="1" height="3.5"/><rect x="681.20" y="16.5" width="1" height="7.5"/><rect x="689.60" y="20.5" width="1" height="3.5"/><rect x="698.00" y="20.5" width="1" height="3.5"/><rect x="706.40" y="20.5" width="1" height="3.5"/></g><g fill="#dcdcdc" font-size="13" letter-spacing="-0.5"><text x="7.9" y="13" text-anchor="middle">0</text><text x="50.2" y="13" text-anchor="middle">15</text><text x="92.2" y="13" text-anchor="middle">30</text><text x="134.2" y="13" text-anchor="middle">45</text><text x="176.2" y="13" text-anchor="middle">60</text><text x="218.2" y="13" text-anchor="middle">75</text><text x="260.2" y="13" text-anchor="middle">90</text><text x="303.4" y="13" text-anchor="middle">105</text><text x="345.4" y="13" text-anchor="middle">120</text><text x="387.4" y="13" text-anchor="middle">135</text><text x="429.4" y="13" text-anchor="middle">150</text><text x="471.4" y="13" text-anchor="middle">165</text><text x="513.4" y="13" text-anchor="middle">180</text><text x="555.4" y="13" text-anchor="middle">195</text><text x="597.4" y="13" text-anchor="middle">210</text><text x="639.4" y="13" text-anchor="middle">225</text><text x="681.4" y="13" text-anchor="middle">240</text></g></svg>
<div style="left:1197.5px;top:654.5px;width:709.7px;height:15.5px;background:#444;"></div>
<div style="left:1201.8px;top:653.2px;width:5.3px;height:17.5px;background:#5fc7a4;border-radius:1px;"></div>
<div style="left:1907.1px;top:653px;width:5.2px;height:17.6px;background:#5fc7a4;border-radius:1px;"></div>
<div style="left:1207.2px;top:673.8px;width:700px;height:18.2px;background:#fdf486;border-radius:4px;border:1px solid #fff;background-image:radial-gradient(ellipse 1.3px 0.9px at 1.3px 0.8px,#cdae40 55%,rgba(205,174,64,0) 100%),radial-gradient(ellipse 1.3px 0.9px at 4.3px 2.3px,#cdae40 55%,rgba(205,174,64,0) 100%);background-size:6px 3px;"></div>
<div class="t" style="top:673px;color:#1c1c1c;left:1215px;letter-spacing:-0.57px;">CenterRectangle</div>
<div style="left:1207.2px;top:762px;width:700px;height:18px;background:#fde87a;border-radius:3px;"></div>
<div class="t" style="top:761.5px;color:#1c1c1c;left:1215px;letter-spacing:-0.53px;font-size:12.5px;">RectangleBG</div>
<div style="left:1212.7px;top:703.0px;width:87.0px;height:1.8px;background:#f5e070;"></div>
<div style="left:1310.7px;top:703.0px;width:31.0px;height:1.8px;background:#f5e070;"></div>
<div style="left:1352.7px;top:703.0px;width:73.0px;height:1.8px;background:#f5e070;"></div>
<div style="left:1439.7px;top:703.0px;width:12.0px;height:1.8px;background:repeating-linear-gradient(to right,#f5e070 0 5px,transparent 5px 10.500px);"></div>
<div style="left:1464.7px;top:703.0px;width:59.0px;height:1.8px;background:#f5e070;"></div>
<div style="left:1537.7px;top:703.0px;width:68.0px;height:1.8px;background:repeating-linear-gradient(to right,#f5e070 0 5px,transparent 5px 10.500px);"></div>
<div style="left:1618.7px;top:703.0px;width:280.20000000000005px;height:1.8px;background:#f5e070;"></div>
<svg style="left:1202.9px;top:699.6px;" width="8.6" height="8.6" viewBox="0 0 8.6 8.6"><path d="M4.300 0l4.300 4.300l-4.300 4.300l-4.300-4.300z" fill="#c8c8c8"/></svg>
<svg style="left:1300.9px;top:699.6px;" width="8.6" height="8.6" viewBox="0 0 8.6 8.6"><path d="M4.300 0l4.300 4.300l-4.300 4.300l-4.300-4.300z" fill="#c8c8c8"/></svg>
<svg style="left:1342.9px;top:699.6px;" width="8.6" height="8.6" viewBox="0 0 8.6 8.6"><path d="M4.300 0l4.300 4.300l-4.300 4.300l-4.300-4.300z" fill="#c8c8c8"/></svg>
<svg style="left:1426.9px;top:699.6px;" width="8.6" height="8.6" viewBox="0 0 8.6 8.6"><path d="M4.300 0l4.300 4.300l-4.300 4.300l-4.300-4.300z" fill="#c8c8c8"/></svg>
<svg style="left:1454.9px;top:699.6px;" width="8.6" height="8.6" viewBox="0 0 8.6 8.6"><path d="M4.300 0l4.300 4.300l-4.300 4.300l-4.300-4.300z" fill="#c8c8c8"/></svg>
<svg style="left:1524.9px;top:699.6px;" width="8.6" height="8.6" viewBox="0 0 8.6 8.6"><path d="M4.300 0l4.300 4.300l-4.300 4.300l-4.300-4.300z" fill="#c8c8c8"/></svg>
<svg style="left:1608.9px;top:699.6px;" width="8.6" height="8.6" viewBox="0 0 8.6 8.6"><path d="M4.300 0l4.300 4.300l-4.300 4.300l-4.300-4.300z" fill="#c8c8c8"/></svg>
<svg style="left:1900.1000000000001px;top:699.6px;" width="8.6" height="8.6" viewBox="0 0 8.6 8.6"><path d="M4.300 0l4.300 4.300l-4.300 4.300l-4.300-4.300z" fill="#c8c8c8"/></svg>
<div style="left:1235.1000000000001px;top:725.2px;width:50.59999999999991px;height:1.8px;background:#f5e070;"></div>
<div style="left:1296.7px;top:725.2px;width:61.799999999999955px;height:1.8px;background:#f5e070;"></div>
<div style="left:1372.5px;top:725.2px;width:28.799999999999955px;height:1.8px;background:repeating-linear-gradient(to right,#f5e070 0 5px,transparent 5px 10.500px);"></div>
<div style="left:1414.3px;top:725.2px;width:53.40000000000009px;height:1.8px;background:#f5e070;"></div>
<div style="left:1478.7px;top:725.2px;width:59.0px;height:1.8px;background:#f5e070;"></div>
<div style="left:1548.7px;top:725.2px;width:73.0px;height:1.8px;background:#f5e070;"></div>
<svg style="left:1225.3000000000002px;top:721.8000000000001px;" width="8.6" height="8.6" viewBox="0 0 8.6 8.6"><path d="M4.300 0l4.300 4.300l-4.300 4.300l-4.300-4.300z" fill="#c8c8c8"/></svg>
<svg style="left:1286.9px;top:721.8000000000001px;" width="8.6" height="8.6" viewBox="0 0 8.6 8.6"><path d="M4.300 0l4.300 4.300l-4.300 4.300l-4.300-4.300z" fill="#c8c8c8"/></svg>
<svg style="left:1359.7px;top:721.8000000000001px;" width="8.6" height="8.6" viewBox="0 0 8.6 8.6"><path d="M4.300 0l4.300 4.300l-4.300 4.300l-4.300-4.300z" fill="#c8c8c8"/></svg>
<svg style="left:1404.5px;top:721.8000000000001px;" width="8.6" height="8.6" viewBox="0 0 8.6 8.6"><path d="M4.300 0l4.300 4.300l-4.300 4.300l-4.300-4.300z" fill="#c8c8c8"/></svg>
<svg style="left:1468.9px;top:721.8000000000001px;" width="8.6" height="8.6" viewBox="0 0 8.6 8.6"><path d="M4.300 0l4.300 4.300l-4.300 4.300l-4.300-4.300z" fill="#c8c8c8"/></svg>
<svg style="left:1538.9px;top:721.8000000000001px;" width="8.6" height="8.6" viewBox="0 0 8.6 8.6"><path d="M4.300 0l4.300 4.300l-4.300 4.300l-4.300-4.300z" fill="#c8c8c8"/></svg>
<svg style="left:1622.9px;top:721.8000000000001px;" width="8.6" height="8.6" viewBox="0 0 8.6 8.6"><path d="M4.300 0l4.300 4.300l-4.300 4.300l-4.300-4.300z" fill="#c8c8c8"/></svg>
<svg style="left:1258.9px;top:743.4000000000001px;" width="8.6" height="8.6" viewBox="0 0 8.6 8.6"><path d="M4.300 0l4.300 4.300l-4.300 4.300l-4.300-4.300z" fill="#c8c8c8"/></svg>
<div style="left:1262.2px;top:652px;width:2px;height:311px;background:rgba(95,199,164,.62);"></div>
<svg style="left:1255.7px;top:643.8px;" width="15" height="9" viewBox="0 0 15 9"><path d="M0 0h15l-7.500 9z" fill="#5fc7a4"/></svg>
<div style="left:1200.6px;top:964px;width:711.5px;height:10px;background:#555;border-radius:5px;"></div>
<div style="left:497.5px;top:977.5px;width:19px;height:19px;background:#2d2d2d;border-radius:4px;border:1px solid #262626;"></div>
<svg style="left:500.5px;top:983.5px;" width="13" height="7" viewBox="0 0 13 7"><path d="M0 3.500L3.500 0H13v7H3.500z" fill="#ddd"/><circle cx="4" cy="3.500" r="1.100" fill="#2d2d2d"/></svg>
<div class="t" style="top:978px;color:#e6e6e6;left:521px;letter-spacing:-0.50px;font-size:12.5px;">1 selected</div>
<div style="left:984px;top:977.5px;width:19px;height:19px;background:#2d2d2d;border-radius:4px;border:1px solid #262626;"></div>
<svg style="left:988.5px;top:982px;" width="10" height="10" viewBox="0 0 10 10"><rect x=".6" y=".6" width="8.800" height="8.800" fill="none" stroke="#ddd" stroke-width="1.200"/><rect x="3.500" y="3.500" width="3" height="3" fill="#ddd"/></svg>
<div style="left:1006.7px;top:977.5px;width:184px;height:19px;background:#555;border-radius:3px;"></div>
<div style="left:1008px;top:978.5px;width:86px;height:17px;background:#222;border-radius:3px;"></div>
<svg style="left:1014px;top:982.5px;" width="11" height="9" viewBox="0 0 11 9"><path d="M0 1h11M2 4.500h9M0 8h11" stroke="#2ecc71" stroke-width="1.700"/></svg>
<div class="t" style="top:978px;color:#e6e6e6;left:1030px;letter-spacing:-0.41px;">Time Editor</div>
<svg style="left:1102px;top:981.5px;" width="12" height="11" viewBox="0 0 12 11"><path d="M1 0v10h11" fill="none" stroke="#ccc" stroke-width="1.100"/><path d="M1 10L10 3" stroke="#ccc" stroke-width="1.100"/></svg>
<div class="t" style="top:978px;color:#e6e6e6;left:1119px;letter-spacing:-0.52px;">Graph Editor</div>
<div style="left:1203.5px;top:978px;width:17.5px;height:18px;background:#2d2d2d;border-radius:4px;border:1px solid #262626;"></div>
<svg style="left:1206px;top:981.5px;" width="13" height="12" viewBox="0 0 13 12"><path d="M0 1h12M0 5h12" stroke="#ddd" stroke-width="1.500"/><path d="M0 9h8" stroke="#ddd" stroke-width="1.500" stroke-dasharray="2.500 1.200"/><path d="M13 9.500v3h-3z" fill="#2ecc71"/></svg>
<div style="left:1223.5px;top:979px;width:150.5px;height:16px;background:#2d2d2d;border-radius:3px;"></div>
<div class="t" style="top:978px;color:#e6e6e6;left:1226px;letter-spacing:-0.57px;">Default Keyframe Layer</div>
<div style="left:1380px;top:979px;width:70px;height:16px;background:#2d2d2d;border-radius:3px;"></div>
<div class="t" style="top:978px;color:#4a4a4a;font-size:12px;left:1385px;">F</div>
<div class="t" style="top:978px;color:#e6e6e6;left:1397px;">-</div>
<div class="t" style="top:978px;color:#e6e6e6;left:1456px;letter-spacing:-0.34px;">Align:</div>
<div style="left:1493px;top:978px;width:52.5px;height:18px;background:#2d2d2d;border-radius:4px;border:1px solid #262626;"></div>
<div style="left:1510.5px;top:978.5px;width:1px;height:17px;background:#262626;"></div>
<div style="left:1528px;top:978.5px;width:1px;height:17px;background:#262626;"></div>
<svg style="left:1496px;top:981px;" width="12" height="12" viewBox="0 0 12 12"><path d="M1 0v12" stroke="#e2e2e2" stroke-width="1.200" stroke-dasharray="2 1.200"/><rect x="3" y="2" width="3" height="3" fill="#e2e2e2"/><path d="M3 9h8" stroke="#e2e2e2" stroke-width="1.500" stroke-dasharray="3 1.500"/></svg>
<svg style="left:1513.5px;top:981px;" width="12" height="12" viewBox="0 0 12 12"><path d="M6 0v12" stroke="#e2e2e2" stroke-width="1.200" stroke-dasharray="2 1.200"/><rect x="4.500" y="2" width="3" height="3" fill="#e2e2e2"/><path d="M1 9h10" stroke="#e2e2e2" stroke-width="1.500" stroke-dasharray="3 1.500"/></svg>
<svg style="left:1531px;top:981px;" width="12" height="12" viewBox="0 0 12 12"><path d="M11 0v12" stroke="#e2e2e2" stroke-width="1.200" stroke-dasharray="2 1.200"/><rect x="6" y="2" width="3" height="3" fill="#e2e2e2"/><path d="M1 9h8" stroke="#e2e2e2" stroke-width="1.500" stroke-dasharray="3 1.500"/></svg>
<div style="left:1549px;top:978px;width:17.5px;height:18px;background:#2d2d2d;border-radius:4px;border:1px solid #262626;"></div>
<svg style="left:1551.5px;top:981px;" width="12" height="12" viewBox="0 0 12 12"><rect x="1.500" y="1.500" width="9" height="9" fill="none" stroke="#a0a0a0" stroke-width="1"/><g fill="#a8a8a8"><rect width="2.600" height="2.600"/><rect x="9.400" width="2.600" height="2.600"/><rect y="9.400" width="2.600" height="2.600"/><rect x="9.400" y="9.400" width="2.600" height="2.600"/><rect x="5" y="5" width="2" height="2"/></g></svg>
<div style="left:1570px;top:978px;width:30.5px;height:18px;background:#2d2d2d;border-radius:4px;border:1px solid #262626;"></div>
<div style="left:1589.5px;top:978.5px;width:1px;height:17px;background:#262626;"></div>
<svg style="left:1573.5px;top:980.5px;" width="13" height="13" viewBox="0 0 13 13"><path d="M4.500 11.500L2.200 7.500A3.800 3.800 0 0 1 8.800 3.700L11 7.500" fill="none" stroke="#d8d8d8" stroke-width="2.200"/><path d="M3.800 10.300L4.500 11.500M10.300 6.300L11 7.500" stroke="#fff" stroke-width="2.200"/></svg>
<svg style="left:1592.5px;top:983.5px;" width="6" height="7" viewBox="0 0 6 7"><path d="M.5 .5l5 3l-5 3z" fill="none" stroke="#999" stroke-width="1"/></svg>
<div style="left:1605px;top:978px;width:30.5px;height:18px;background:#2d2d2d;border-radius:4px;border:1px solid #262626;"></div>
<div style="left:1624.5px;top:978.5px;width:1px;height:17px;background:#262626;"></div>
<svg style="left:1608px;top:981px;" width="14" height="12" viewBox="0 0 14 12"><path d="M7 0v12" stroke="#e2e2e2" stroke-width="1.200"/><path d="M0 6h5M9 6h5M3 4v4M11 4v4" stroke="#e2e2e2" stroke-width="1.100"/></svg>
<svg style="left:1627.5px;top:983.5px;" width="6" height="7" viewBox="0 0 6 7"><path d="M.5 .5l5 3l-5 3z" fill="none" stroke="#999" stroke-width="1"/></svg>
<svg style="left:1743px;top:980.5px;" width="14" height="14" viewBox="0 0 14 14"><circle cx="6" cy="6" r="5" fill="none" stroke="#ccc" stroke-width="1.200"/><path d="M3.500 6h5" stroke="#ccc" stroke-width="1.200"/><path d="M9.500 9.500l4 4" stroke="#ccc" stroke-width="1.500"/></svg>
<div style="left:1767px;top:986px;width:115px;height:2.5px;background:#3a3a3a;border-radius:1px;"></div>
<svg style="left:1761.5px;top:981.5px;" width="11" height="11" viewBox="0 0 11 11"><circle cx="5.500" cy="5.500" r="5" fill="#86d0b6"/><circle cx="5.500" cy="5.500" r="2.200" fill="#55b092"/></svg>
<svg style="left:1887.5px;top:980.5px;" width="14" height="14" viewBox="0 0 14 14"><circle cx="6" cy="6" r="5" fill="none" stroke="#ccc" stroke-width="1.200"/><path d="M3.500 6h5M6 3.500v5" stroke="#ccc" stroke-width="1.200"/><path d="M9.500 9.500l4 4" stroke="#ccc" stroke-width="1.500"/></svg>
<div style="left:494px;top:1003.5px;width:1420px;height:23.5px;background:#3c3c3c;"></div>
<div style="left:498px;top:1009.5px;width:2px;height:2px;background:#8a8a8a;"></div>
<div style="left:498px;top:1014.5px;width:2px;height:2px;background:#8a8a8a;"></div>
<div style="left:498px;top:1019.5px;width:2px;height:2px;background:#8a8a8a;"></div>
<div style="left:506.5px;top:1006px;width:18px;height:18px;background:#2d2d2d;border-radius:4px;border:1px solid #262626;"></div>
<svg style="left:509.5px;top:1009px;" width="12" height="12" viewBox="0 0 12 12"><path d="M0 0h12v9H5l-3 3V9H0z" fill="#ddd"/><path d="M2 2.500h8M2 4.500h8M2 6.500h6" stroke="#2d2d2d" stroke-width="1"/></svg>
<svg style="left:521.5px;top:1021px;" width="3" height="3" viewBox="0 0 3 3"><path d="M3 0v3h-3z" fill="#2ecc71"/></svg>
<div style="left:527.5px;top:1008px;width:18.5px;height:14px;background:#d9bb5e;border-radius:2px;"></div>
<div class="t" style="top:1006px;color:#333;left:386.79999999999995px;width:300px;text-align:center;">0</div>
<svg style="left:553.5px;top:1012px;" width="6" height="6" viewBox="0 0 6 6"><circle cx="3" cy="3" r="3" fill="#d9bb5e"/></svg>
<div class="t" style="top:1006.2px;color:#dcdcdc;left:565px;letter-spacing:-0.52px;font-size:12.5px;">You are working in an unsaved scene.</div>
<div style="left:1477px;top:1006.2px;width:80px;height:17.6px;background:#d9bb5e;border-radius:2px;"></div>
<div class="t" style="top:1006px;color:#2a2a2a;left:1482.5px;letter-spacing:-0.40px;font-size:12.0px;">Feedback</div>
<svg style="left:1539px;top:1009.5px;" width="12" height="12" viewBox="0 0 12 12"><path d="M1 0h7l3 3v9H1z" fill="#f4f4f4"/><path d="M3 10l1-3l5-5l2 2l-5 5z" fill="#e8734a"/></svg>
<div style="left:1560px;top:1006.2px;width:108.3px;height:17.6px;background:#2ecc71;border-radius:2px;"></div>
<div class="t" style="top:1006px;color:#2a2a2a;left:1565.5px;letter-spacing:-0.41px;font-size:12.5px;">Upgrade to Pro</div>
<svg style="left:1649px;top:1010.5px;" width="14" height="10" viewBox="0 0 14 10"><path d="M0 6c0-3 1-5 3-5s3 2 3 5s-1 4-3 4s-3-1-3-4zM8 6c0-3 1-5 3-5s3 2 3 5s-1 4-3 4s-3-1-3-4z" fill="#f2d03c"/></svg>
<div style="left:1671.7px;top:1006.2px;width:130px;height:17.6px;background:#c489f5;border-radius:2px;"></div>
<div class="t" style="top:1006px;color:#2a2a2a;left:1677px;letter-spacing:-0.40px;font-size:12.5px;">New Beta Available</div>
<svg style="left:1784px;top:1009.5px;" width="12" height="12" viewBox="0 0 12 12"><circle cx="6" cy="6" r="5.500" fill="#f5c542"/><circle cx="4" cy="5" r="1.300" fill="#e0453a"/><circle cx="8" cy="5" r="1.300" fill="#e0453a"/><path d="M3.500 8q2.500 2 5 0" stroke="#7a4a10" fill="none"/></svg>
<div style="left:1804.8px;top:1006.2px;width:106.2px;height:17.6px;background:#3b9cf5;border-radius:2px;"></div>
<div class="t" style="top:1006px;color:#2a2a2a;left:1810px;letter-spacing:-0.49px;font-size:12.5px;">Tips and Tricks</div>
<svg style="left:1893px;top:1009.5px;" width="13" height="12" viewBox="0 0 13 12"><path d="M12.500 0c-4 0-7 2-8.500 6l2.500 2.500c4-1.500 6-4.500 6-8.500z" fill="#e8e8f0"/><path d="M4 6L1 6.500l-1 2l3 .5zM6.500 8.500L6 11.500l-2 1l-.500-3z" fill="#e0453a"/><circle cx="9" cy="3.500" r="1.200" fill="#3b9cf5"/></svg>
</body></html>
